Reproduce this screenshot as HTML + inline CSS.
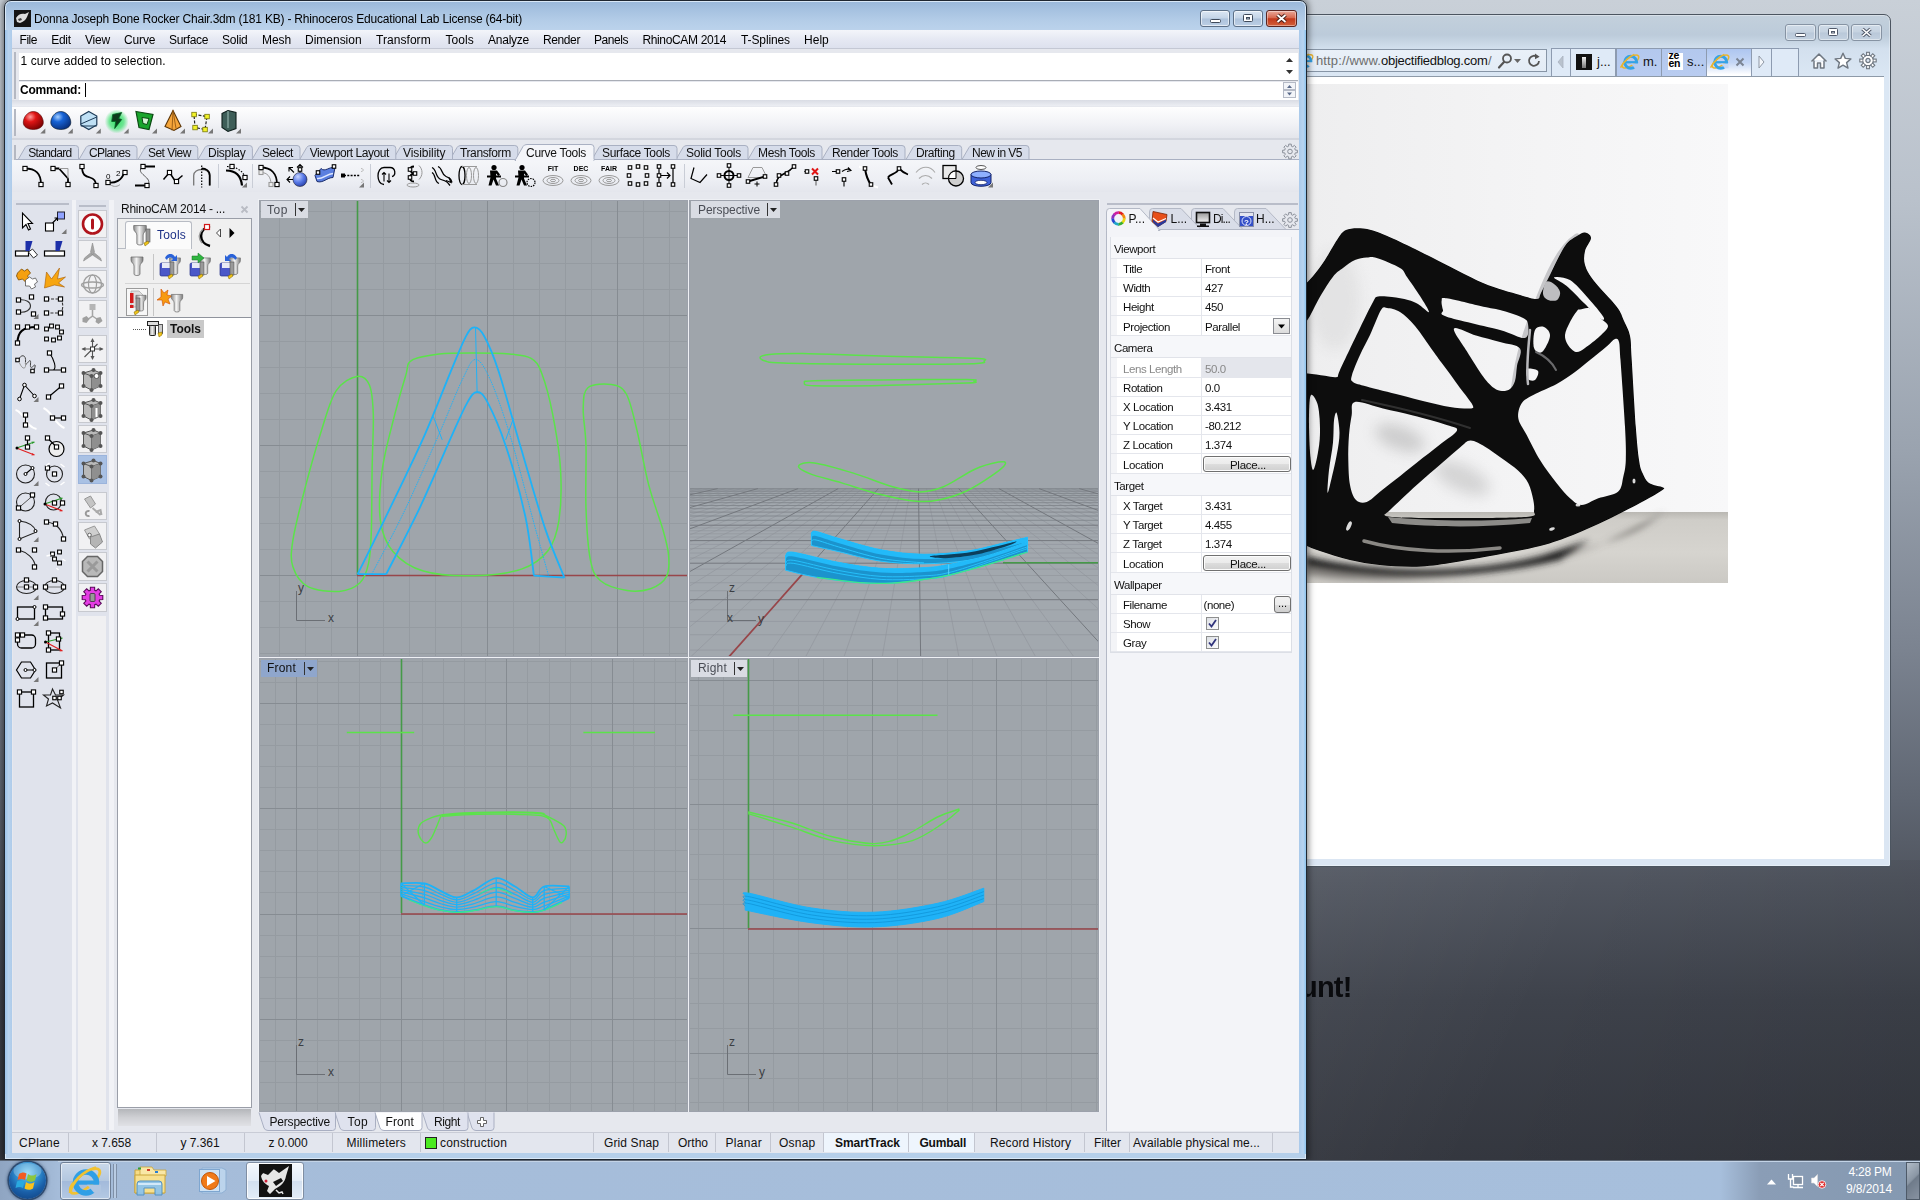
<!DOCTYPE html>
<html><head><meta charset="utf-8"><title>Rhino</title>
<style>
html,body{margin:0;padding:0;}
body{width:1920px;height:1200px;overflow:hidden;position:relative;font-family:"Liberation Sans",sans-serif;font-size:12px;
background:linear-gradient(180deg,#c9d0d8 0px,#b9c1cb 200px,#9aa3af 450px,#7b8390 650px,#5f6672 800px,#50555f 880px,#3e424b 1000px,#34373f 1160px);}
.a{position:absolute;box-sizing:border-box;}
.t{position:absolute;white-space:nowrap;line-height:1.24;}
svg{position:absolute;overflow:visible;}
</style></head><body>

<div class="a" style="left:1300px;top:860px;width:620px;height:300px;background:linear-gradient(115deg,rgba(255,255,255,.05) 0,rgba(255,255,255,0) 40%,rgba(0,0,0,.08) 100%)"></div>
<span class="t" style="left:1300px;top:970px;font-size:29px;font-weight:bold;color:#0a0b0e;letter-spacing:-0.8px;filter:blur(0.7px)">unt!</span>
<div class="a" style="left:1300px;top:14px;width:591px;height:853px;border:1px solid #4c5560;border-radius:7px 7px 2px 2px;background:linear-gradient(180deg,#c3d0dc 0px,#bccbda 20px,#d3e0ee 34px,#dbe7f4 62px,#dbe6f3 100%);box-shadow:0 0 0 1px rgba(255,255,255,.35) inset"></div>
<div class="a" style="left:1306px;top:76px;width:578px;height:783px;background:#fff;border-top:1px solid #8e9aa8"></div>
<div class="a" style="left:1306px;top:84px;width:422px;height:499px;background:linear-gradient(90deg,#eeeeef 0%,#f3f3f4 45%,#f8f8f9 100%)"></div>
<div class="a" style="left:1306px;top:512px;width:422px;height:71px;background:linear-gradient(180deg,#b9b7b2 0,#cfcdc8 8px,#d6d4cf 40px,#cbc9c4 100%)"></div>
<div class="a" style="left:1300px;top:49px;width:247px;height:23px;border:1px solid #8795a6;background:linear-gradient(180deg,#e9f0f8,#e3ecf6)"></div>
<svg style="left:1297px;top:52px" width="17" height="17" viewBox="0 0 20 20"><ellipse cx="10" cy="10" rx="10.2" ry="4.2" transform="rotate(-35 10 10)" fill="none" stroke="#e9b52f" stroke-width="1.6"/><circle cx="10.2" cy="10.8" r="6.3" fill="none" stroke="#35a3e6" stroke-width="3.2"/><rect x="5" y="9.6" width="12" height="2.4" fill="#35a3e6"/><path d="M10.5 12 h8 v5 h-4z" fill="#e6eef8"/><path d="M-0.5 16.5 C2 12 6 6 14 2.6" fill="none" stroke="#e9b52f" stroke-width="1.6"/></svg>
<span class="t" style="left:1316.0px;top:52.9px;font-size:13px;letter-spacing:0.121px;color:#6d6d6d;">http</span>
<span class="t" style="left:1338.2px;top:52.9px;font-size:13px;letter-spacing:0.134px;color:#6d6d6d;">://www.</span>
<span class="t" style="left:1381.0px;top:52.9px;font-size:13px;letter-spacing:-0.252px;color:#111;">objectifiedblog.com</span>
<span class="t" style="left:1488.0px;top:52.9px;font-size:13px;color:#6d6d6d;">/</span>
<svg style="left:1493.500px;top:50px" width="52" height="22"><circle cx="13" cy="8.5" r="4" fill="none" stroke="#555" stroke-width="1.8"/><path d="M10 12 L5 17.5" stroke="#555" stroke-width="2.2" stroke-linecap="round"/><path d="M20 9 h7 l-3.5 4z" fill="#666"/><path d="M43.5 7.2 A5 5 0 1 0 45 11" fill="none" stroke="#555" stroke-width="1.8"/><path d="M41 3.5 l4.6 3.2 -4.6 2.6z" fill="#555"/></svg>
<div class="a" style="left:1551px;top:48px;width:248px;height:28px;background:#dfeaf7;border:1px solid #8d9bb0;border-bottom:none"></div>
<div class="a" style="left:1551px;top:48px;width:20px;height:28px;background:#dfeaf7;border:1px solid #8d9bb0;border-bottom:none"></div>
<div class="a" style="left:1570px;top:48px;width:46px;height:28px;background:#dfeaf7;border:1px solid #8d9bb0;border-bottom:none"></div>
<div class="a" style="left:1616px;top:48px;width:46px;height:28px;background:linear-gradient(180deg,#b3c8ee,#b9ccf0);border:1px solid #8d9bb0;border-bottom:none"></div>
<div class="a" style="left:1661px;top:48px;width:46px;height:28px;background:linear-gradient(180deg,#b3c8ee,#b9ccf0);border:1px solid #8d9bb0;border-bottom:none"></div>
<div class="a" style="left:1706px;top:48px;width:46px;height:28px;background:linear-gradient(180deg,#aec6f0 0,#c4d6f5 50%,#fff 95%);border:1px solid #8d9bb0;border-bottom:none"></div>
<div class="a" style="left:1751px;top:48px;width:21px;height:28px;background:#dfeaf7;border:1px solid #8d9bb0;border-bottom:none"></div>
<div class="a" style="left:1771px;top:48px;width:28px;height:28px;background:#dfeaf7;border:1px solid #8d9bb0;border-bottom:none"></div>
<svg style="left:1551px;top:48px" width="250" height="28"><path d="M12 8 l-5 6 5 6z" fill="#b9c2cd" stroke="#a9b3c0" stroke-width=".8"/><path d="M208 8 l5 6 -5 6z" fill="#f4f7fb" stroke="#8f98a5" stroke-width="1"/></svg>
<div class="a" style="left:1576px;top:54px;width:16px;height:16px;background:#111"></div><div class="a" style="left:1582px;top:57px;width:4px;height:11px;background:linear-gradient(180deg,#eee,#777)"></div>
<span class="t" style="left:1597.0px;top:53.9px;font-size:13px;color:#111;">j...</span>
<svg style="left:1621px;top:52px" width="19" height="19" viewBox="0 0 20 20"><ellipse cx="10" cy="10" rx="10.2" ry="4.2" transform="rotate(-35 10 10)" fill="none" stroke="#e9b52f" stroke-width="1.6"/><circle cx="10.2" cy="10.8" r="6.3" fill="none" stroke="#35a3e6" stroke-width="3.2"/><rect x="5" y="9.6" width="12" height="2.4" fill="#35a3e6"/><path d="M10.5 12 h8 v5 h-4z" fill="#b6caef"/><path d="M-0.5 16.5 C2 12 6 6 14 2.6" fill="none" stroke="#e9b52f" stroke-width="1.6"/></svg>
<span class="t" style="left:1643.0px;top:53.9px;font-size:13px;color:#111;">m.</span>
<div class="a" style="left:1668px;top:53px;width:15px;height:17px;background:#fff"></div>
<span class="t" style="left:1668.5px;top:51px;font-size:10.5px;font-weight:bold;line-height:8px;color:#000;letter-spacing:-0.3px">ze<br>en</span>
<span class="t" style="left:1687.0px;top:53.9px;font-size:13px;color:#111;">s...</span>
<svg style="left:1711px;top:52px" width="19" height="19" viewBox="0 0 20 20"><ellipse cx="10" cy="10" rx="10.2" ry="4.2" transform="rotate(-35 10 10)" fill="none" stroke="#e9b52f" stroke-width="1.6"/><circle cx="10.2" cy="10.8" r="6.3" fill="none" stroke="#35a3e6" stroke-width="3.2"/><rect x="5" y="9.6" width="12" height="2.4" fill="#35a3e6"/><path d="M10.5 12 h8 v5 h-4z" fill="#c6d8f5"/><path d="M-0.5 16.5 C2 12 6 6 14 2.6" fill="none" stroke="#e9b52f" stroke-width="1.6"/></svg>
<svg style="left:1734px;top:56px" width="12" height="12"><path d="M2.5 2.5 L9.5 9.5 M9.5 2.5 L2.5 9.5" stroke="#7b8493" stroke-width="2"/></svg>
<svg style="left:1808px;top:50px" width="72" height="22"><path d="M3.5 11.5 L11 4 L18.5 11.5 M6 10.5 V18 H9.5 V13 H12.5 V18 H16 V10.5" fill="#fff" stroke="#6f7781" stroke-width="1.5" stroke-linejoin="round"/><path d="M35 3.2 l2.3 5.2 5.6.5 -4.3 3.7 1.4 5.5 -5-3 -5 3 1.4-5.5 -4.3-3.7 5.6-.5z" fill="#fff" stroke="#6f7781" stroke-width="1.4" stroke-linejoin="round"/><g transform="translate(60,10.5)"><circle r="5.3" fill="#fff" stroke="#6f7781" stroke-width="1.4"/><circle r="2.1" fill="#dce7f4" stroke="#6f7781" stroke-width="1.3"/><rect x="-1.4" y="-8.2" width="2.8" height="3.2" fill="#fff" stroke="#6f7781" stroke-width="1.1" transform="rotate(0)"/><rect x="-1.4" y="-8.2" width="2.8" height="3.2" fill="#fff" stroke="#6f7781" stroke-width="1.1" transform="rotate(45)"/><rect x="-1.4" y="-8.2" width="2.8" height="3.2" fill="#fff" stroke="#6f7781" stroke-width="1.1" transform="rotate(90)"/><rect x="-1.4" y="-8.2" width="2.8" height="3.2" fill="#fff" stroke="#6f7781" stroke-width="1.1" transform="rotate(135)"/><rect x="-1.4" y="-8.2" width="2.8" height="3.2" fill="#fff" stroke="#6f7781" stroke-width="1.1" transform="rotate(180)"/><rect x="-1.4" y="-8.2" width="2.8" height="3.2" fill="#fff" stroke="#6f7781" stroke-width="1.1" transform="rotate(225)"/><rect x="-1.4" y="-8.2" width="2.8" height="3.2" fill="#fff" stroke="#6f7781" stroke-width="1.1" transform="rotate(270)"/><rect x="-1.4" y="-8.2" width="2.8" height="3.2" fill="#fff" stroke="#6f7781" stroke-width="1.1" transform="rotate(315)"/><circle r="4.6" fill="#fff"/><circle r="2.1" fill="#dce7f4" stroke="#6f7781" stroke-width="1.3"/></g></svg>
<div class="a" style="left:1785px;top:24px;width:31px;height:17px;border:1px solid #8693a3;border-radius:3px;background:linear-gradient(180deg,#cfdbe8 0,#c5d2e0 48%,#b9c8d9 52%,#c3d1e0 100%);box-shadow:0 0 0 1px rgba(255,255,255,.45) inset"></div>
<div class="a" style="left:1818px;top:24px;width:31px;height:17px;border:1px solid #8693a3;border-radius:3px;background:linear-gradient(180deg,#cfdbe8 0,#c5d2e0 48%,#b9c8d9 52%,#c3d1e0 100%);box-shadow:0 0 0 1px rgba(255,255,255,.45) inset"></div>
<div class="a" style="left:1851px;top:24px;width:31px;height:17px;border:1px solid #8693a3;border-radius:3px;background:linear-gradient(180deg,#cfdbe8 0,#c5d2e0 48%,#b9c8d9 52%,#c3d1e0 100%);box-shadow:0 0 0 1px rgba(255,255,255,.45) inset"></div>
<svg style="left:1785px;top:24px" width="100" height="17"><rect x="10.5" y="9.5" width="10" height="3" rx="1" fill="#fff" stroke="#50596a" stroke-width="1"/><rect x="43.500" y="4.5" width="9" height="7" rx="1" fill="#fff" stroke="#50596a" stroke-width="1"/><rect x="46.5" y="7.5" width="3" height="1.5" fill="#dfe6ee" stroke="#50596a" stroke-width="1"/><path d="M77.500 5 L85.500 12 M85.500 5 L77.500 12" stroke="#50596a" stroke-width="3.6"/><path d="M77.500 5 L85.500 12 M85.500 5 L77.500 12" stroke="#fff" stroke-width="1.6"/></svg>
<svg style="left:0;top:0" width="1920" height="1200" viewBox="0 0 1920 1200">
<defs><clipPath id="photo"><rect x="1306" y="84" width="422" height="499"/></clipPath><filter id="bl6" x="-30%" y="-30%" width="160%" height="160%"><feGaussianBlur stdDeviation="7"/></filter><filter id="bl3" x="-30%" y="-30%" width="160%" height="160%"><feGaussianBlur stdDeviation="3"/></filter><filter id="bl1" x="-30%" y="-30%" width="160%" height="160%"><feGaussianBlur stdDeviation="0.6"/></filter>
<mask id="chm" maskUnits="userSpaceOnUse" x="1290" y="200" width="400" height="400"><rect x="1290" y="200" width="400" height="400" fill="#fff"/><g fill="#000" filter="url(#bl1)">
<path d="M1285.0 345.0 C1286.8 338.2 1292.4 331.0 1296.0 327.0 C1299.6 323.0 1302.7 326.1 1306.7 321.0 C1310.7 315.9 1315.6 304.1 1320.0 296.7 C1324.4 289.3 1329.2 281.5 1333.0 276.7 C1336.8 271.9 1339.3 270.8 1343.0 268.0 C1346.7 265.2 1351.0 261.8 1355.0 260.0 C1359.0 258.2 1363.1 257.8 1366.7 257.5 C1370.3 257.2 1371.2 256.2 1376.7 258.0 C1382.2 259.8 1395.0 264.8 1400.0 268.0 C1405.0 271.2 1403.7 272.3 1407.0 277.0 C1410.3 281.7 1416.3 290.2 1420.0 296.0 C1423.7 301.8 1429.3 310.7 1429.0 312.0 C1428.7 313.3 1421.5 306.0 1418.0 304.0 C1414.5 302.0 1412.3 301.2 1408.0 300.0 C1403.7 298.8 1397.0 297.6 1392.0 297.0 C1387.0 296.4 1381.2 295.7 1378.0 296.5 C1374.8 297.3 1376.0 296.8 1373.0 302.0 C1370.0 307.2 1365.5 316.7 1360.0 328.0 C1354.5 339.3 1343.8 361.8 1340.0 370.0 C1336.2 378.2 1339.5 376.0 1337.0 377.0 C1334.5 378.0 1329.8 376.4 1325.0 375.8 C1320.2 375.2 1312.8 374.0 1308.0 373.5 C1303.2 373.0 1299.8 373.9 1296.0 373.0 C1292.2 372.1 1286.8 372.7 1285.0 368.0 C1283.2 363.3 1283.2 351.8 1285.0 345.0 z"/>
<path d="M1381.0 310.0 C1383.8 305.5 1383.8 307.7 1387.0 308.0 C1390.2 308.3 1395.3 309.0 1400.0 312.0 C1404.7 315.0 1409.5 319.5 1415.0 326.0 C1420.5 332.5 1428.7 345.0 1433.0 351.0 C1437.3 357.0 1438.2 358.2 1441.0 362.0 C1443.8 365.8 1446.8 369.7 1450.0 374.0 C1453.2 378.3 1457.2 384.2 1460.0 388.0 C1462.8 391.8 1464.8 394.0 1467.0 397.0 C1469.2 400.0 1472.5 404.1 1473.0 406.0 C1473.5 407.9 1473.8 408.3 1470.0 408.5 C1466.2 408.7 1457.5 408.2 1450.0 407.0 C1442.5 405.8 1433.3 403.5 1425.0 401.5 C1416.7 399.5 1409.7 397.5 1400.0 395.0 C1390.3 392.5 1374.5 388.7 1366.7 386.5 C1358.9 384.3 1355.5 383.9 1353.0 382.0 C1350.5 380.1 1350.8 379.5 1352.0 375.0 C1353.2 370.5 1357.0 361.7 1360.0 355.0 C1363.0 348.3 1366.5 342.5 1370.0 335.0 C1373.5 327.5 1378.2 314.5 1381.0 310.0 z"/>
<path d="M1355.0 402.0 C1360.2 400.9 1373.3 406.2 1383.0 408.5 C1392.7 410.8 1402.4 412.8 1413.0 415.5 C1423.6 418.2 1439.4 422.5 1446.7 425.0 C1454.0 427.5 1458.1 427.2 1457.0 430.5 C1455.9 433.8 1446.7 439.1 1440.0 444.5 C1433.3 449.9 1424.2 456.8 1416.7 462.7 C1409.2 468.6 1401.1 475.2 1395.0 480.0 C1388.9 484.8 1384.7 488.0 1380.0 491.7 C1375.3 495.4 1370.7 500.6 1366.7 502.0 C1362.7 503.4 1358.8 502.8 1356.0 500.0 C1353.2 497.2 1351.3 491.7 1350.0 485.0 C1348.7 478.3 1348.5 468.3 1348.3 460.0 C1348.1 451.7 1348.4 442.5 1349.0 435.0 C1349.6 427.5 1350.7 420.5 1351.7 415.0 C1352.7 409.5 1349.8 403.1 1355.0 402.0 z"/>
<path d="M1470.5 440.5 C1474.7 440.4 1479.8 443.7 1485.0 446.7 C1490.2 449.7 1496.2 454.3 1501.7 458.3 C1507.2 462.3 1513.9 466.6 1518.3 470.8 C1522.7 475.0 1525.8 478.4 1528.3 483.3 C1530.8 488.2 1532.3 495.4 1533.3 500.0 C1534.2 504.6 1534.5 508.2 1534.0 511.0 C1533.5 513.8 1538.5 515.3 1530.0 516.5 C1521.5 517.7 1499.4 517.8 1483.3 518.0 C1467.2 518.2 1447.2 518.1 1433.3 518.0 C1419.4 517.9 1408.0 517.9 1400.0 517.5 C1392.0 517.1 1386.7 516.8 1385.0 515.5 C1383.3 514.2 1384.7 515.1 1390.0 510.0 C1395.3 504.9 1408.1 492.8 1416.7 485.0 C1425.3 477.2 1434.5 469.6 1441.7 463.3 C1448.9 457.1 1455.2 451.3 1460.0 447.5 C1464.8 443.7 1466.3 440.6 1470.5 440.5 z"/>
<path d="M1521.7 403.3 C1524.2 399.4 1527.5 398.2 1533.3 395.0 C1539.1 391.8 1549.8 387.8 1556.7 384.0 C1563.7 380.2 1569.5 376.0 1575.0 372.0 C1580.5 368.0 1584.8 364.2 1590.0 360.0 C1595.2 355.8 1601.8 350.5 1606.0 347.0 C1610.2 343.5 1612.8 339.8 1615.0 339.0 C1617.2 338.2 1618.1 338.5 1619.0 342.0 C1619.9 345.5 1619.5 345.9 1620.5 360.0 C1621.5 374.1 1624.1 410.0 1625.0 426.7 C1625.9 443.4 1626.1 451.7 1625.8 460.0 C1625.5 468.3 1624.6 471.4 1623.3 476.7 C1622.0 482.0 1622.2 488.1 1618.0 491.7 C1613.8 495.3 1604.3 496.1 1598.3 498.3 C1592.2 500.5 1586.4 505.0 1581.7 505.0 C1577.0 505.0 1574.2 501.9 1570.0 498.3 C1565.8 494.7 1561.7 489.7 1556.7 483.3 C1551.7 476.9 1545.0 468.1 1540.0 460.0 C1535.0 451.9 1530.3 441.9 1526.7 435.0 C1523.1 428.1 1519.1 423.6 1518.3 418.3 C1517.5 413.0 1519.2 407.2 1521.7 403.3 z"/>
<path d="M1441.7 300.5 C1442.3 298.6 1439.8 297.3 1446.7 298.3 C1453.6 299.3 1474.4 304.8 1483.3 306.7 C1492.2 308.6 1493.5 308.2 1500.0 310.0 C1506.5 311.8 1517.3 315.2 1522.0 317.5 C1526.7 319.8 1527.5 320.6 1528.0 324.0 C1528.5 327.4 1529.7 337.0 1525.0 338.0 C1520.3 339.0 1513.0 333.6 1500.0 330.0 C1487.0 326.4 1456.2 320.0 1446.7 316.7 C1437.2 313.4 1443.8 312.7 1443.0 310.0 C1442.2 307.3 1441.1 302.4 1441.7 300.5 z"/>
<path d="M1454.0 328.5 C1455.5 325.9 1468.3 333.2 1476.0 335.5 C1483.7 337.8 1492.7 339.8 1500.0 342.0 C1507.3 344.2 1517.2 344.5 1520.0 348.5 C1522.8 352.5 1517.8 360.6 1517.0 366.0 C1516.2 371.4 1516.2 377.2 1515.0 381.0 C1513.8 384.8 1512.2 387.3 1510.0 389.0 C1507.8 390.7 1504.7 391.2 1502.0 391.0 C1499.3 390.8 1497.1 390.4 1494.0 388.0 C1490.9 385.6 1487.8 382.9 1483.3 376.7 C1478.8 370.5 1471.6 359.0 1466.7 351.0 C1461.8 343.0 1452.5 331.1 1454.0 328.5 z"/>
<path d="M1580.0 309.5 C1582.2 309.1 1586.7 307.1 1590.0 308.5 C1593.3 309.9 1597.0 315.1 1600.0 318.0 C1603.0 320.9 1608.0 323.0 1608.0 326.0 C1608.0 329.0 1603.8 332.3 1600.0 336.0 C1596.2 339.7 1589.0 345.3 1585.0 348.0 C1581.0 350.7 1578.8 352.5 1576.0 352.0 C1573.2 351.5 1569.8 347.8 1568.0 345.0 C1566.2 342.2 1564.7 338.8 1565.0 335.0 C1565.3 331.2 1568.0 326.0 1570.0 322.0 C1572.0 318.0 1575.3 313.1 1577.0 311.0 C1578.7 308.9 1577.8 309.9 1580.0 309.5 z"/>
<path d="M1554.0 277.5 C1554.5 276.5 1564.3 276.6 1570.0 280.0 C1575.7 283.4 1582.5 291.9 1588.0 298.0 C1593.5 304.1 1601.3 313.3 1603.3 316.7 C1605.3 320.1 1603.2 320.8 1600.0 318.5 C1596.8 316.2 1589.5 308.4 1584.0 303.0 C1578.5 297.6 1571.7 290.2 1566.7 286.0 C1561.7 281.8 1553.5 278.5 1554.0 277.5 z"/>
<path d="M1535.0 330.0 C1536.7 326.5 1541.5 326.0 1544.0 327.0 C1546.5 328.0 1550.3 331.8 1550.0 336.0 C1549.7 340.2 1544.7 350.0 1542.0 352.0 C1539.3 354.0 1535.2 351.7 1534.0 348.0 C1532.8 344.3 1533.3 333.5 1535.0 330.0 z"/>
<path d="M1527.0 369.0 C1528.7 367.7 1536.7 369.2 1538.0 371.0 C1539.3 372.8 1536.7 378.7 1535.0 380.0 C1533.3 381.3 1529.3 380.8 1528.0 379.0 C1526.7 377.2 1525.3 370.3 1527.0 369.0 z"/>
<path d="M1311.0 395.0 C1312.5 393.5 1316.5 399.7 1318.0 406.0 C1319.5 412.3 1320.1 424.8 1320.0 433.0 C1319.9 441.2 1318.7 448.8 1317.5 455.0 C1316.3 461.2 1314.2 470.5 1313.0 470.0 C1311.8 469.5 1310.7 461.2 1310.0 452.0 C1309.3 442.8 1308.8 424.5 1309.0 415.0 C1309.2 405.5 1309.5 396.5 1311.0 395.0 z"/>
<path d="M1336.7 413.0 C1337.6 415.1 1339.5 426.0 1339.5 433.0 C1339.5 440.0 1338.3 446.3 1336.7 455.0 C1335.1 463.7 1331.5 478.8 1330.0 485.0 C1328.5 491.2 1327.7 494.5 1327.5 492.0 C1327.3 489.5 1328.1 478.2 1329.0 470.0 C1329.9 461.8 1332.2 450.8 1333.0 442.5 C1333.8 434.2 1333.4 425.4 1334.0 420.5 C1334.6 415.6 1335.8 410.9 1336.7 413.0 z"/>
</g></mask></defs>
<g clip-path="url(#photo)">
<g filter="url(#bl6)" opacity=".4"><ellipse cx="1400" cy="438" rx="26" ry="12" fill="#9a9a9a" transform="rotate(20 1400 438)"/><ellipse cx="1462" cy="478" rx="30" ry="13" fill="#a8a8a8" transform="rotate(25 1462 478)"/><ellipse cx="1335" cy="300" rx="25" ry="50" fill="#d2d2d2"/></g>
<g filter="url(#bl3)"><path d="M1306 560 C1380 578 1480 578 1560 556 S1640 530 1665 512 L1600 545 C1540 570 1400 590 1306 575z" fill="#6f6d69" opacity=".8"/><path d="M1306 556 C1380 574 1470 574 1540 556 L1590 540 L1560 560 C1480 580 1380 580 1306 566z" fill="#222"/></g>
<path d="M1577 237 C1560 248 1548 276 1538 302 S1519 352 1514.500 388" fill="none" stroke="#c6c6c9" stroke-width="7" stroke-linecap="round"/>
<g mask="url(#chm)"><path d="M1280.0 330.0 C1281.3 298.3 1283.0 316.3 1286.0 310.0 C1289.0 303.7 1293.6 297.6 1298.0 292.0 C1302.4 286.4 1308.0 282.0 1312.5 276.7 C1317.0 271.4 1320.9 266.1 1325.0 260.0 C1329.1 253.9 1333.5 245.0 1337.0 240.0 C1340.5 235.0 1341.7 231.9 1346.0 230.0 C1350.3 228.1 1357.3 228.0 1363.0 228.5 C1368.7 229.0 1372.7 230.2 1380.0 233.0 C1387.3 235.8 1397.9 240.8 1406.7 245.0 C1415.5 249.2 1420.3 251.7 1433.0 258.0 C1445.7 264.3 1468.5 276.8 1483.0 283.0 C1497.5 289.2 1511.0 292.3 1520.0 295.0 C1529.0 297.7 1533.5 299.3 1537.0 299.0 C1540.5 298.7 1538.8 297.0 1541.0 293.0 C1543.2 289.0 1546.0 282.8 1550.0 275.0 C1554.0 267.2 1560.5 252.5 1565.0 246.0 C1569.5 239.5 1573.7 238.2 1577.0 236.0 C1580.3 233.8 1582.7 232.2 1585.0 232.5 C1587.3 232.8 1591.0 234.9 1591.0 238.0 C1591.0 241.1 1586.0 246.5 1585.0 251.0 C1584.0 255.5 1583.5 260.0 1585.0 265.0 C1586.5 270.0 1588.7 274.1 1594.0 281.0 C1599.3 287.9 1611.7 300.0 1616.7 306.7 C1621.7 313.4 1621.8 316.1 1624.0 321.0 C1626.2 325.9 1628.7 329.5 1630.0 336.0 C1631.3 342.5 1630.7 344.8 1631.7 360.0 C1632.7 375.2 1634.6 410.3 1635.8 427.0 C1637.0 443.7 1637.9 452.3 1639.0 460.0 C1640.1 467.7 1640.8 469.2 1642.5 473.0 C1644.2 476.8 1645.6 480.6 1649.0 483.0 C1652.4 485.4 1661.0 486.2 1663.0 487.5 C1665.0 488.8 1664.8 488.4 1661.0 491.0 C1657.2 493.6 1649.0 498.2 1640.0 503.0 C1631.0 507.8 1617.9 514.7 1606.7 520.0 C1595.5 525.3 1584.1 530.7 1573.0 535.0 C1561.9 539.3 1553.8 542.5 1540.0 546.0 C1526.2 549.5 1505.0 553.2 1490.0 556.0 C1475.0 558.8 1462.2 561.2 1450.0 563.0 C1437.8 564.8 1428.4 566.4 1416.7 566.7 C1405.0 567.0 1391.1 566.1 1380.0 565.0 C1368.9 563.9 1360.0 562.3 1350.0 560.0 C1340.0 557.7 1328.7 554.0 1320.0 551.0 C1311.3 548.0 1304.0 544.8 1298.0 542.0 C1292.0 539.2 1287.3 541.0 1284.0 534.0 C1280.7 527.0 1278.7 534.0 1278.0 500.0 C1277.3 466.0 1278.7 361.7 1280.0 330.0 z" fill="#070707" filter="url(#bl1)"/></g>
<path d="M1546.0 282.0 C1547.8 280.3 1551.7 282.3 1554.0 284.0 C1556.3 285.7 1559.5 289.3 1560.0 292.0 C1560.5 294.7 1559.0 298.7 1557.0 300.0 C1555.0 301.3 1550.3 301.0 1548.0 300.0 C1545.7 299.0 1543.3 297.0 1543.0 294.0 C1542.7 291.0 1544.2 283.7 1546.0 282.0 z" fill="#bdbdc0"/>
<path d="M1388 517 C1430 521 1480 522 1532 518 L1530 523 C1480 528 1430 527 1392 523z" fill="#8c8b88"/>
<path d="M1364 541 C1400 551 1450 554 1500 548" fill="none" stroke="#8a8884" stroke-width="3.500" stroke-linecap="round"/>
<path d="M1530 330 C1528 350 1526 368 1528 384" fill="none" stroke="#b9b9bc" stroke-width="2.500" stroke-linecap="round"/>
<path d="M1536 352 C1545 356 1552 362 1556 370" fill="none" stroke="#6a6a6c" stroke-width="2" stroke-linecap="round"/>
<g fill="#fff" opacity=".85"><ellipse cx="1349" cy="526" rx="2" ry="5" transform="rotate(25 1349 526)"/><ellipse cx="1552" cy="529" rx="3" ry="1.500" transform="rotate(-20 1552 529)"/><ellipse cx="1634" cy="481" rx="1.500" ry="2.500"/><ellipse cx="1578" cy="505" rx="2.500" ry="1.500"/></g>
<g fill="none" stroke="#3a3a3a" stroke-width="2" stroke-linecap="round" opacity=".8"><path d="M1362 400 C1400 408 1440 418 1470 428"/></g>
</g></svg>
<div class="a" style="left:4px;top:0px;width:1303px;height:1160px;border:1px solid #1f2731;border-radius:7px 7px 1px 1px;background:linear-gradient(180deg,#9ab8da 0px,#a5c1e0 8px,#b4cde8 20px,#bcd3ec 30px,#bad2eb 60px,#b5cfea 100%);box-shadow:0 0 0 1px #d9e8f7 inset,0 0 7px 1px rgba(0,0,0,.55)"></div>
<div class="a" style="left:1299px;top:30px;width:7px;height:1124px;background:linear-gradient(90deg,#a9c9ea,#b8d4f0 60%,#8ec4ee)"></div>
<div class="a" style="left:5px;top:30px;width:7px;height:1124px;background:linear-gradient(90deg,#9cc3ea,#b8d3ee 50%,#aecbea)"></div>
<div class="a" style="left:12px;top:30px;width:1287px;height:1123px;background:#e6e8ee"></div>
<svg style="left:14px;top:10px" width="17" height="17" viewBox="0 0 17 17"><rect width="17" height="17" fill="#151515"/><path d="M2 8 C4 4 8 3 11 4 L15 2 L13 7 C12 10 9 12 6 13 L3 12z" fill="#ddd"/><path d="M4 9 l3 -1 1 2 -3 1z" fill="#444"/></svg>
<span class="t" style="left:34.0px;top:11.6px;font-size:12px;letter-spacing:-0.198px;color:#000;">Donna Joseph Bone Rocker Chair.3dm (181 KB) - Rhinoceros Educational Lab License (64-bit)</span>
<div class="a" style="left:1200px;top:10px;width:30px;height:17px;border:1px solid #5c6f86;border-radius:3px;background:linear-gradient(180deg,#dbe6f3 0,#c4d4e7 48%,#adc2db 52%,#bccfe5 100%);box-shadow:0 0 0 1px rgba(255,255,255,.6) inset"></div>
<div class="a" style="left:1233px;top:10px;width:30px;height:17px;border:1px solid #5c6f86;border-radius:3px;background:linear-gradient(180deg,#dbe6f3 0,#c4d4e7 48%,#adc2db 52%,#bccfe5 100%);box-shadow:0 0 0 1px rgba(255,255,255,.6) inset"></div>
<div class="a" style="left:1266px;top:10px;width:31px;height:17px;border:1px solid #5b2520;border-radius:3px;background:linear-gradient(180deg,#e9a99a 0,#d8694f 45%,#c2391c 52%,#d3603a 100%);box-shadow:0 0 0 1px rgba(255,255,255,.4) inset"></div>
<svg style="left:1200px;top:10px" width="100" height="17"><rect x="10.5" y="9.5" width="10" height="3" rx="1" fill="#fff" stroke="#3f4a5a" stroke-width="1"/><rect x="43.5" y="4.5" width="9" height="7" rx="1" fill="#fff" stroke="#3f4a5a" stroke-width="1"/><rect x="46.5" y="7.5" width="3" height="1.5" fill="#c4d4e7" stroke="#3f4a5a" stroke-width="1"/><path d="M77.5 5 L85.5 12 M85.5 5 L77.5 12" stroke="#4a2019" stroke-width="3.8"/><path d="M77.5 5 L85.5 12 M85.5 5 L77.5 12" stroke="#fff" stroke-width="1.8"/></svg>
<div class="a" style="left:12px;top:30px;width:1287px;height:19px;background:linear-gradient(180deg,#f3f5fa 0,#e6e9f3 50%,#dde1ee 100%);border-bottom:1px solid #c4c8d4"></div>
<span class="t" style="left:19.6px;top:32.6px;font-size:12px;letter-spacing:-0.534px;color:#000;">File</span>
<span class="t" style="left:51.2px;top:32.6px;font-size:12px;letter-spacing:-0.269px;color:#000;">Edit</span>
<span class="t" style="left:84.9px;top:32.6px;font-size:12px;letter-spacing:-0.173px;color:#000;">View</span>
<span class="t" style="left:124.0px;top:32.6px;font-size:12px;letter-spacing:-0.122px;color:#000;">Curve</span>
<span class="t" style="left:169.0px;top:32.6px;font-size:12px;letter-spacing:-0.336px;color:#000;">Surface</span>
<span class="t" style="left:222.0px;top:32.6px;font-size:12px;letter-spacing:-0.237px;color:#000;">Solid</span>
<span class="t" style="left:262.0px;top:32.6px;font-size:12px;letter-spacing:-0.085px;color:#000;">Mesh</span>
<span class="t" style="left:305.0px;top:32.6px;font-size:12px;letter-spacing:-0.010px;color:#000;">Dimension</span>
<span class="t" style="left:376.0px;top:32.6px;font-size:12px;letter-spacing:0.053px;color:#000;">Transform</span>
<span class="t" style="left:445.5px;top:32.6px;font-size:12px;letter-spacing:0.037px;color:#000;">Tools</span>
<span class="t" style="left:488.0px;top:32.6px;font-size:12px;letter-spacing:-0.241px;color:#000;">Analyze</span>
<span class="t" style="left:543.0px;top:32.6px;font-size:12px;letter-spacing:-0.392px;color:#000;">Render</span>
<span class="t" style="left:594.0px;top:32.6px;font-size:12px;letter-spacing:-0.448px;color:#000;">Panels</span>
<span class="t" style="left:642.4px;top:32.6px;font-size:12px;letter-spacing:-0.342px;color:#000;">RhinoCAM 2014</span>
<span class="t" style="left:741.0px;top:32.6px;font-size:12px;letter-spacing:-0.113px;color:#000;">T-Splines</span>
<span class="t" style="left:804.0px;top:32.6px;font-size:12px;letter-spacing:0.030px;color:#000;">Help</span>
<div class="a" style="left:14px;top:52px;width:2px;height:47px;border-left:1px solid #b4b8c2;border-right:1px solid #b4b8c2"></div>
<div class="a" style="left:19px;top:53px;width:1279px;height:28px;background:#fff;border-bottom:1px solid #a9adb6"></div>
<div class="a" style="left:19px;top:82px;width:1279px;height:18px;background:#fff"></div>
<div class="a" style="left:12px;top:100px;width:1287px;height:6px;background:linear-gradient(180deg,#d9dce4,#eceef3)"></div>
<span class="t" style="left:20.6px;top:53.6px;font-size:12px;letter-spacing:0.059px;color:#000;">1 curve added to selection.</span>
<span class="t" style="left:20.0px;top:82.6px;font-size:12px;font-weight:bold;letter-spacing:-0.208px;color:#000;">Command:</span>
<div class="a" style="left:85px;top:83px;width:1px;height:14px;background:#000"></div>
<svg style="left:1280px;top:53px" width="18" height="47"><path d="M6 9 l3.5 -4 3.500 4z M6 17 l3.5 4 3.500 -4z" fill="#333"/><rect x="3.5" y="29.500" width="12" height="7" fill="#f2f4f8" stroke="#b5bac6"/><rect x="3.500" y="37.500" width="12" height="7" fill="#f2f4f8" stroke="#b5bac6"/><path d="M7 35 l2.500 -3 2.500 3z M7 39.500 l2.500 3 2.500 -3z" fill="#5a6a8a"/></svg>
<div class="a" style="left:12px;top:107px;width:1287px;height:31px;background:linear-gradient(180deg,#fefefe 0,#f1f2f6 55%,#e3e5eb 100%)"></div>
<div class="a" style="left:12px;top:138px;width:1287px;height:2px;background:#d3d6de"></div>
<div class="a" style="left:14px;top:109px;width:2px;height:27px;border-left:1px solid #b4b8c2;border-right:1px solid #b4b8c2"></div>
<div class="a" style="left:14px;top:145px;width:2px;height:45px;border-left:1px solid #b4b8c2;border-right:1px solid #b4b8c2"></div>
<div class="a" style="left:12px;top:160px;width:1287px;height:32px;background:linear-gradient(180deg,#f5f6f9 0,#edeff4 60%,#e4e6ed 100%)"></div>
<svg style="left:0;top:0" width="1310" height="200" viewBox="0 0 1310 200">
<defs><radialGradient id="gr" cx=".35" cy=".3" r=".8"><stop offset="0" stop-color="#ff9d9d"/><stop offset=".35" stop-color="#e01515"/><stop offset="1" stop-color="#6e0000"/></radialGradient><radialGradient id="gb" cx=".35" cy=".3" r=".8"><stop offset="0" stop-color="#a6d0ff"/><stop offset=".35" stop-color="#1763d6"/><stop offset="1" stop-color="#062a73"/></radialGradient><radialGradient id="gs" cx=".35" cy=".3" r=".8"><stop offset="0" stop-color="#c9d6ff"/><stop offset=".5" stop-color="#5a7be8"/><stop offset="1" stop-color="#2038a0"/></radialGradient><radialGradient id="gg" cx=".5" cy=".5" r=".5"><stop offset="0" stop-color="#37e06a"/><stop offset=".6" stop-color="#37e06a" stop-opacity=".7"/><stop offset="1" stop-color="#37e06a" stop-opacity="0"/></radialGradient></defs>
<path d="M33.3 111.5 c-6 0 -10 6 -10 11 c0 4 4 7 10 7 s10 -3 10 -7 c0 -5 -4 -11 -10 -11z" fill="url(#gr)" stroke="#500" stroke-width=".6"/><path d="M40.3 133.5 l5 0 0 -5z" fill="#777"/>
<path d="M60.8 111.5 c-6 0 -10 6 -10 11 c0 4 4 7 10 7 s10 -3 10 -7 c0 -5 -4 -11 -10 -11z" fill="url(#gb)" stroke="#012" stroke-width=".6"/><path d="M67.8 133.5 l5 0 0 -5z" fill="#777"/>
<path d="M88.8 111.5 l8 4.500 v9 l-8 4.500 -8 -4.500 v-9z" fill="#bfe0f5" stroke="#1c3a57" stroke-width="1.2"/><path d="M80.8 124 l16 -7 M80.8 126 h16" stroke="#1c3a57" stroke-width="1" fill="none"/><path d="M95.8 133.5 l5 0 0 -5z" fill="#777"/>
<circle cx="116.7" cy="121.5" r="12" fill="url(#gg)"/><path d="M112.7 114.5 l9 -2 -3 6 3 1 -7 9 1 -7 -4 0z" fill="#0d3a1c" stroke="#062" stroke-width=".8"/><path d="M123.7 133.5 l5 0 0 -5z" fill="#777"/>
<path d="M136 111.5 l17 3 -4 15 -10 -2z" fill="#19a52c" stroke="#0a4a12" stroke-width="1.2"/><path d="M142 117.5 l7 1 -2 6 -4 -1z" fill="#d6f5d6" stroke="#0a4a12" stroke-width="1"/><path d="M152 133.5 l5 0 0 -5z" fill="#777"/>
<path d="M173 110.5 l8 16 -7 4 -9 -4z" fill="#f5a53a" stroke="#5b3405" stroke-width="1.1"/><path d="M173 110.5 l-1 20 M173 110.5 l3 18" stroke="#8a5210" stroke-width=".8"/><path d="M180 133.5 l5 0 0 -5z" fill="#777"/>
<path d="M194 114.5 l13 2 -2 13 -10 -2z" fill="none" stroke="#222" stroke-width="1.2" stroke-dasharray="3 1.5"/>
<rect x="191.8" y="112.3" width="4.500" height="4.500" fill="#f2f22a" stroke="#77770a" stroke-width=".8"/>
<rect x="204.8" y="114.3" width="4.500" height="4.500" fill="#f2f22a" stroke="#77770a" stroke-width=".8"/>
<rect x="202.8" y="127.3" width="4.500" height="4.500" fill="#f2f22a" stroke="#77770a" stroke-width=".8"/>
<rect x="192.8" y="125.3" width="4.500" height="4.500" fill="#f2f22a" stroke="#77770a" stroke-width=".8"/>
<path d="M208 133.5 l5 0 0 -5z" fill="#777"/>
<path d="M222 113.5 l6 -3 8 2 v16 l-8 3 -6 -4z" fill="#3e5e58" stroke="#0f1f1c" stroke-width="1.1"/><path d="M228 111 v17" stroke="#9fc0b8" stroke-width="1"/><path d="M236 133.5 l5 0 0 -5z" fill="#777"/>
<g transform="translate(21,163.5)"><path d="M4 5 C14 5 20 9 20 21" fill="none" stroke="#000" stroke-width="1.8"/><rect x="1.9" y="2.9" width="4.2" height="4.2" fill="#fff" stroke="#000" stroke-width="1.1"/><rect x="17.9" y="18.9" width="4.2" height="4.2" fill="#fff" stroke="#000" stroke-width="1.1"/></g>
<g transform="translate(49,163.5)"><path d="M4 5 L10 5 L19 15 L19 21" fill="none" stroke="#000" stroke-width="1.8" stroke-linejoin="round"/><path d="M10 5 h9 v10" fill="none" stroke="#999" stroke-width="1"/><rect x="1.9" y="2.9" width="4.2" height="4.2" fill="#fff" stroke="#000" stroke-width="1.1"/><rect x="16.9" y="18.9" width="4.2" height="4.2" fill="#fff" stroke="#000" stroke-width="1.1"/></g>
<g transform="translate(77,163.5)"><path d="M5 3 C5 12 9 13 13 14 S19 17 19 22" fill="none" stroke="#000" stroke-width="1.8"/><rect x="2.9" y="0.9" width="4.2" height="4.2" fill="#fff" stroke="#000" stroke-width="1.1"/><rect x="16.9" y="19.9" width="4.2" height="4.2" fill="#fff" stroke="#000" stroke-width="1.1"/></g>
<g transform="translate(105,163.5)"><path d="M3 19 C10 20 17 17 19 9" fill="none" stroke="#000" stroke-width="1.8"/><path d="M5 21 c4 3 8 2 10 0" fill="none" stroke="#999" stroke-width="1"/><text x="1" y="15" font-size="8" font-family="Liberation Sans">0</text><text x="11" y="12" font-size="8" font-family="Liberation Sans">2</text><rect x="0.9" y="16.9" width="4.2" height="4.2" fill="#fff" stroke="#000" stroke-width="1.1"/><rect x="17.9" y="6.9" width="4.2" height="4.2" fill="#fff" stroke="#000" stroke-width="1.1"/></g>
<g transform="translate(133,163.5)"><path d="M10 3 h12 M2 22 h12" stroke="#000" stroke-width="2" fill="none"/><path d="M10 3 C0 10 22 14 14 22" fill="none" stroke="#555" stroke-width="1"/><rect x="7.9" y="0.9" width="4.2" height="4.2" fill="#fff" stroke="#000" stroke-width="1.1"/><rect x="11.9" y="19.9" width="4.2" height="4.2" fill="#fff" stroke="#000" stroke-width="1.1"/></g>
<g transform="translate(160.5,163.5)"><path d="M3 16 L9 9 L15 18 L22 12" fill="none" stroke="#000" stroke-width="1.5" stroke-linejoin="round"/><rect x="6.9" y="6.9" width="4.2" height="4.2" fill="#fff" stroke="#000" stroke-width="1.1"/><rect x="13.9" y="15.9" width="4.2" height="4.2" fill="#fff" stroke="#000" stroke-width="1.1"/></g>
<g transform="translate(189.7,163.5)"><path d="M4 22 V12 C4 4 20 4 20 12 V22" fill="none" stroke="#777" stroke-width="1.3"/><path d="M20 22 V12 C20 7 16 5 12 5" fill="none" stroke="#000" stroke-width="1.8"/><path d="M12 2 V24" stroke="#000" stroke-width="1.2" stroke-dasharray="1.5 1.5"/></g>
<path d="M218.5 164 v24" stroke="#c9cdd6"/><path d="M252.500 164 v24 M370.5 164 v24 M684.5 164 v24" stroke="#c9cdd6"/>
<g transform="translate(223,163.5)"><path d="M3 7 C13 7 18 12 19 22" fill="none" stroke="#000" stroke-width="2.2"/><path d="M4 3 C14 3 22 8 23 18" fill="none" stroke="#000" stroke-width="1.2" stroke-dasharray="1.5 1.5"/><rect x="6.9" y="0.9" width="4.2" height="4.2" fill="#fff" stroke="#000" stroke-width="1.1"/><rect x="19.9" y="11.9" width="4.2" height="4.2" fill="#fff" stroke="#000" stroke-width="1.1"/><path d="M19 24 l5 0 0 -5z" fill="#777"/></g>
<g transform="translate(257,163.5)"><path d="M4 4 C14 4 20 10 20 21" fill="none" stroke="#000" stroke-width="1.8"/><path d="M4 9 C10 9 14 13 14 21" fill="none" stroke="#999" stroke-width="1"/><rect x="1.9" y="1.9" width="4.2" height="4.2" fill="#fff" stroke="#000" stroke-width="1.1"/><rect x="17.9" y="18.9" width="4.2" height="4.2" fill="#fff" stroke="#000" stroke-width="1.1"/><rect x="2" y="7" width="4" height="4" fill="#eee" stroke="#999" stroke-width="1.1"/><rect x="12" y="19" width="4" height="4" fill="#eee" stroke="#999" stroke-width="1.1"/></g>
<g transform="translate(286,163.5)"><circle cx="14" cy="16" r="7" fill="url(#gs)" stroke="#223" stroke-width=".6"/><path d="M14 9 V1 M11 4 l3 -3 3 3 M7 16 H1 M4 13 l-3 3 3 3 M8 9 L3 4 M3 8 V4 H7" fill="none" stroke="#000" stroke-width="1.1"/><rect x="12.25" y="4.25" width="3.5" height="3.5" fill="#fff" stroke="#000" stroke-width="1.1"/></g>
<g transform="translate(313,163.5)"><path d="M2 12 L8 5 C12 9 16 3 22 4 L20 14 C14 14 10 20 4 18z" fill="#5b7fe0" stroke="#1a2c6b" stroke-width="1"/><path d="M4 15 C10 16 14 10 20 10" stroke="#dfe8ff" stroke-width="1.500" fill="none"/><rect x="3.25" y="7.25" width="3.5" height="3.5" fill="#fff" stroke="#000" stroke-width="1.1"/><rect x="19.25" y="1.25" width="3.5" height="3.5" fill="#fff" stroke="#000" stroke-width="1.1"/></g>
<g transform="translate(340,163.5)"><path d="M4 12 H20" stroke="#000" stroke-width="1.600" stroke-dasharray="2 1.3"/><rect x="1" y="10" width="4" height="4"/><path d="M21 5 c3 0 3 3 0 3 M21 16 c3 0 3 3 0 3" stroke="#bbb" fill="none"/><path d="M19 24 l5 0 0 -5z" fill="#777"/></g>
<g transform="translate(374,163.5)"><path d="M10 21 C2 21 2 4 10 4 H16 C22 4 22 12 18 13" fill="none" stroke="#000" stroke-width="1.300"/><path d="M10 9 v9 M8 11 l2 -2 2 2 M15 10 v9 M13 17 l2 2 2 -2" stroke="#000" stroke-width="1.100" fill="none"/></g>
<g transform="translate(401,163.5)"><path d="M13 3 C7 3 9 9 13 10 C8 11 7 18 13 18" fill="none" stroke="#000" stroke-width="1.8"/><path d="M18 2 c4 4 4 10 0 14" fill="none" stroke="#999" stroke-width="1"/><ellipse cx="12" cy="21.500" rx="6" ry="2" fill="none" stroke="#999" stroke-width="1"/><rect x="7.25" y="4.25" width="3.5" height="3.5" fill="#fff" stroke="#000" stroke-width="1.1"/><rect x="12.25" y="8.25" width="3.5" height="3.5" fill="#fff" stroke="#000" stroke-width="1.1"/><rect x="7.25" y="12.25" width="3.5" height="3.5" fill="#fff" stroke="#000" stroke-width="1.1"/></g>
<g transform="translate(429,163.5)"><path d="M3 4 C8 6 6 14 12 16 S18 18 21 22 M9 3 C14 5 12 11 17 13 S22 16 23 19" fill="none" stroke="#000" stroke-width="1.300"/><path d="M3 9 C7 11 5 18 10 20" fill="none" stroke="#000" stroke-width="1.300"/><path d="M17 17 l5 2 -2 -5" fill="none" stroke="#000" stroke-width="1.200"/></g>
<g transform="translate(457,163.5)"><ellipse cx="5" cy="12" rx="3" ry="9" fill="none" stroke="#000" stroke-width="1.300"/><ellipse cx="12" cy="12" rx="2.500" ry="8" fill="none" stroke="#999" stroke-width="1"/><ellipse cx="19" cy="12" rx="2.500" ry="8" fill="none" stroke="#999" stroke-width="1"/><path d="M5 3 H20 M5 21 H20" fill="none" stroke="#999" stroke-width="1"/></g>
<g transform="translate(485,163.5)"><circle cx="9" cy="4" r="2.600"/><path d="M5 7 h7 l3 4 -1.500 1.500 -2.500 -2.500 v5 l3 7 h-3 l-2.500 -6 -2 6 h-3 l2 -8z"/><path d="M2 12 h14 v2 h-14z"/><circle cx="18" cy="19" r="4" fill="none" stroke="#888" stroke-width="1.200"/></g>
<g transform="translate(513,163.5)"><circle cx="9" cy="4" r="2.600"/><path d="M5 7 h7 l3 4 -1.500 1.500 -2.500 -2.500 v5 l3 7 h-3 l-2.500 -6 -2 6 h-3 l2 -8z"/><path d="M2 12 h14 v2 h-14z"/><circle cx="18" cy="19" r="4" fill="none" stroke="#000" stroke-width="1.200" stroke-dasharray="1.500 1"/></g>
<g transform="translate(541,163.5)"><text x="12" y="7" font-size="7" text-anchor="middle" font-family="Liberation Sans" font-weight="bold">FIT</text><ellipse cx="12" cy="17" rx="10" ry="5" fill="none" stroke="#999" stroke-width="1"/><ellipse cx="12" cy="17" rx="6" ry="3" fill="none" stroke="#999" stroke-width="1"/><ellipse cx="12" cy="17" rx="2.500" ry="1.200" fill="none" stroke="#999" stroke-width="1"/></g>
<g transform="translate(569,163.5)"><text x="12" y="7" font-size="7" text-anchor="middle" font-family="Liberation Sans" font-weight="bold">DEC</text><ellipse cx="12" cy="17" rx="10" ry="5" fill="none" stroke="#999" stroke-width="1"/><ellipse cx="12" cy="17" rx="6" ry="3" fill="none" stroke="#999" stroke-width="1"/><ellipse cx="12" cy="17" rx="2.500" ry="1.200" fill="none" stroke="#999" stroke-width="1"/></g>
<g transform="translate(597,163.5)"><text x="12" y="7" font-size="7" text-anchor="middle" font-family="Liberation Sans" font-weight="bold">FAIR</text><ellipse cx="12" cy="17" rx="10" ry="5" fill="none" stroke="#999" stroke-width="1"/><ellipse cx="12" cy="17" rx="6" ry="3" fill="none" stroke="#999" stroke-width="1"/><ellipse cx="12" cy="17" rx="2.500" ry="1.200" fill="none" stroke="#999" stroke-width="1"/></g>
<g transform="translate(626,163.5)"><rect x="2.25" y="2.25" width="3.5" height="3.5" fill="#fff" stroke="#000" stroke-width="1.1"/><rect x="10.25" y="1.25" width="3.5" height="3.5" fill="#fff" stroke="#000" stroke-width="1.1"/><rect x="18.25" y="2.25" width="3.5" height="3.5" fill="#fff" stroke="#000" stroke-width="1.1"/><rect x="1.25" y="10.25" width="3.5" height="3.5" fill="#fff" stroke="#000" stroke-width="1.1"/><rect x="19.25" y="10.25" width="3.5" height="3.5" fill="#fff" stroke="#000" stroke-width="1.1"/><rect x="2.25" y="18.25" width="3.5" height="3.5" fill="#fff" stroke="#000" stroke-width="1.1"/><rect x="10.25" y="19.25" width="3.5" height="3.5" fill="#fff" stroke="#000" stroke-width="1.1"/><rect x="18.25" y="18.25" width="3.5" height="3.5" fill="#fff" stroke="#000" stroke-width="1.1"/></g>
<g transform="translate(654,163.5)"><path d="M5 4 V20 M19 4 V20 M5 12 H16 M13 9 l3 3 -3 3" fill="none" stroke="#000" stroke-width="1.200"/><rect x="3.25" y="1.25" width="3.5" height="3.5" fill="#fff" stroke="#000" stroke-width="1.1"/><rect x="3.25" y="10.25" width="3.5" height="3.5" fill="#fff" stroke="#000" stroke-width="1.1"/><rect x="3.25" y="19.25" width="3.5" height="3.5" fill="#fff" stroke="#000" stroke-width="1.1"/><rect x="17.25" y="1.25" width="3.5" height="3.5" fill="#fff" stroke="#000" stroke-width="1.1"/><rect x="17.25" y="19.25" width="3.5" height="3.5" fill="#fff" stroke="#000" stroke-width="1.1"/></g>
<g transform="translate(688,163.5)"><path d="M6 4 L3 15 L12 19 L19 11" fill="none" stroke="#000" stroke-width="1.200"/></g>
<g transform="translate(717,163.5)"><circle cx="12" cy="12" r="4.500" fill="none" stroke="#000" stroke-width="2"/><path d="M12 2 V22 M2 12 H22" stroke="#000" stroke-width="1"/><rect x="10.25" y="0.25" width="3.5" height="3.5" fill="#fff" stroke="#000" stroke-width="1.1"/><rect x="10.25" y="20.25" width="3.5" height="3.5" fill="#fff" stroke="#000" stroke-width="1.1"/><rect x="0.25" y="10.25" width="3.5" height="3.5" fill="#fff" stroke="#000" stroke-width="1.1"/><rect x="20.25" y="10.25" width="3.5" height="3.5" fill="#fff" stroke="#000" stroke-width="1.1"/></g>
<g transform="translate(745,163.5)"><path d="M8 4 H17 L22 14 H3z" fill="none" stroke="#999" stroke-width="1"/><path d="M3 18 L20 13" stroke="#000" stroke-width="2"/><path d="M12 18 v5 M9.500 20.500 h5" stroke="#000" stroke-width="1"/><rect x="1.25" y="16.25" width="3.5" height="3.5" fill="#fff" stroke="#000" stroke-width="1.1"/><rect x="18.25" y="11.25" width="3.5" height="3.5" fill="#fff" stroke="#000" stroke-width="1.1"/></g>
<g transform="translate(773,163.5)"><path d="M3 21 C4 10 12 12 20 4" fill="none" stroke="#000" stroke-width="1.500"/><path d="M3 21 L6 12 L14 10 L20 4" fill="none" stroke="#000" stroke-width="1" stroke-dasharray="1.500 1.500"/><rect x="1.25" y="19.25" width="3.5" height="3.5" fill="#fff" stroke="#000" stroke-width="1.1"/><rect x="4.25" y="10.25" width="3.5" height="3.5" fill="#fff" stroke="#000" stroke-width="1.1"/><rect x="12.25" y="8.25" width="3.5" height="3.5" fill="#fff" stroke="#000" stroke-width="1.1"/><rect x="19.25" y="1.25" width="3.5" height="3.5" fill="#fff" stroke="#000" stroke-width="1.1"/></g>
<g transform="translate(801,163.5)"><path d="M3 8 h5 M15 14 v8" stroke="#555" stroke-width="1"/><path d="M11 5 l6 6 M17 5 l-6 6" stroke="#e01515" stroke-width="2"/><rect x="4.25" y="6.25" width="3.5" height="3.5" fill="#fff" stroke="#000" stroke-width="1.1"/><rect x="13.25" y="13.25" width="3.5" height="3.5" fill="#fff" stroke="#000" stroke-width="1.1"/></g>
<g transform="translate(830,163.5)"><path d="M2 8 h6 M14 14 v9 M12 8 c4 -3 7 -3 9 -1 M18 4 l3 3 -4 1" fill="none" stroke="#000" stroke-width="1.100"/><rect x="6.25" y="6.25" width="3.5" height="3.5" fill="#fff" stroke="#000" stroke-width="1.1"/><rect x="12.25" y="14.25" width="3.5" height="3.5" fill="#fff" stroke="#000" stroke-width="1.1"/></g>
<g transform="translate(858,163.5)"><path d="M7 5 C8 12 9 16 13 21" fill="none" stroke="#000" stroke-width="2"/><path d="M1 3 l5 2 M14 22 l6 2" stroke="#fff" stroke-width="2"/><rect x="5.25" y="3.25" width="3.5" height="3.5" fill="#fff" stroke="#000" stroke-width="1.1"/><rect x="11.25" y="19.25" width="3.5" height="3.5" fill="#fff" stroke="#000" stroke-width="1.1"/></g>
<g transform="translate(885,163.5)"><path d="M3 14 C5 10 12 11 14 5 C17 8 20 10 23 11 M3 14 L7 21" fill="none" stroke="#000" stroke-width="1.800"/><rect x="12.25" y="3.25" width="3.5" height="3.5" fill="#fff" stroke="#000" stroke-width="1.1"/></g>
<g transform="translate(913,163.5)"><path d="M3 9 c6 -7 14 -7 19 0 M6 15 c4 -4 9 -4 13 0 M9 21 c2 -2 5 -2 7 0" fill="none" stroke="#aaa" stroke-width="1.100"/></g>
<g transform="translate(941,163.5)"><rect x="2" y="2" width="13" height="13" fill="#e9e9e9" stroke="#000" stroke-width="1.300"/><circle cx="15" cy="15" r="7.500" fill="#cfcfcf" stroke="#000" stroke-width="1.300"/><path d="M15 15 V7.500 A7.500 7.500 0 0 0 7.500 15z" fill="#fff" stroke="#000" stroke-width="1"/></g>
<g transform="translate(969,163.5)"><ellipse cx="12" cy="4" rx="5" ry="2" fill="#fff" stroke="#555" stroke-width="1"/><path d="M2 11 v8 c0 5 20 5 20 0 v-8z" fill="#3f62d8" stroke="#14246b" stroke-width="1"/><ellipse cx="12" cy="11" rx="10" ry="3.500" fill="#8fb0ff" stroke="#14246b" stroke-width="1"/><ellipse cx="12" cy="19" rx="6" ry="2.200" fill="#fff" stroke="#14246b" stroke-width=".8"/><path d="M19 24 l5 0 0 -5z" fill="#777"/></g>
<path d="M16 159.500 H1299" stroke="#a9b0c2"/>
<path d="M962 159.500 L969 147.500 Q970 145.500 973 145.500 H1026 Q1029 145.500 1029 148.500 V159.500z" fill="#d6dcea" stroke="#a9b0c2"/>
<path d="M906 159.500 L913 147.500 Q914 145.500 917 145.500 H958.7 Q961.7 145.500 961.7 148.500 V159.500z" fill="#d6dcea" stroke="#a9b0c2"/>
<path d="M822 159.500 L829 147.500 Q830 145.500 833 145.500 H902 Q905 145.500 905 148.500 V159.500z" fill="#d6dcea" stroke="#a9b0c2"/>
<path d="M748 159.500 L755 147.500 Q756 145.500 759 145.500 H819 Q822 145.500 822 148.500 V159.500z" fill="#d6dcea" stroke="#a9b0c2"/>
<path d="M676 159.500 L683 147.500 Q684 145.500 687 145.500 H745 Q748 145.500 748 148.500 V159.500z" fill="#d6dcea" stroke="#a9b0c2"/>
<path d="M592 159.500 L599 147.500 Q600 145.500 603 145.500 H674 Q677 145.500 677 148.500 V159.500z" fill="#d6dcea" stroke="#a9b0c2"/>
<path d="M450 159.500 L457 147.500 Q458 145.500 461 145.500 H514.8 Q517.8 145.500 517.8 148.500 V159.500z" fill="#d6dcea" stroke="#a9b0c2"/>
<path d="M393 159.500 L400 147.500 Q401 145.500 404 145.500 H449.5 Q452.5 145.500 452.5 148.500 V159.500z" fill="#d6dcea" stroke="#a9b0c2"/>
<path d="M299.7 159.500 L306.7 147.500 Q307.7 145.500 310.7 145.500 H392.8 Q395.8 145.500 395.8 148.500 V159.500z" fill="#d6dcea" stroke="#a9b0c2"/>
<path d="M252 159.500 L259 147.500 Q260 145.500 263 145.500 H297 Q300 145.500 300 148.500 V159.500z" fill="#d6dcea" stroke="#a9b0c2"/>
<path d="M198 159.500 L205 147.500 Q206 145.500 209 145.500 H249.4 Q252.4 145.500 252.4 148.500 V159.500z" fill="#d6dcea" stroke="#a9b0c2"/>
<path d="M138 159.500 L145 147.500 Q146 145.500 149 145.500 H194.8 Q197.8 145.500 197.8 148.500 V159.500z" fill="#d6dcea" stroke="#a9b0c2"/>
<path d="M79 159.500 L86 147.500 Q87 145.500 90 145.500 H134 Q137 145.500 137 148.500 V159.500z" fill="#d6dcea" stroke="#a9b0c2"/>
<path d="M18.2 159.500 L25.2 147.500 Q26.2 145.500 29.2 145.500 H75.5 Q78.5 145.500 78.5 148.500 V159.500z" fill="#d6dcea" stroke="#a9b0c2"/>
<path d="M515 160.500 L523 146.500 Q524 144.500 527 144.500 H591 Q594 144.500 594 147.500 V160.500z" fill="#f4f5f9" stroke="#a9b0c2"/><path d="M516 160 H593.5" stroke="#f4f5f9" stroke-width="2"/>
<g transform="translate(1290,151.5)" fill="none" stroke="#8a8f99" stroke-width="1"><path d="M7.39 -1.27 L7.39 1.27 L5.33 1.36 L4.73 2.81 L6.12 4.33 L4.33 6.12 L2.81 4.73 L1.36 5.33 L1.27 7.39 L-1.27 7.39 L-1.36 5.33 L-2.81 4.73 L-4.33 6.12 L-6.12 4.33 L-4.73 2.81 L-5.33 1.36 L-7.39 1.27 L-7.39 -1.27 L-5.33 -1.36 L-4.73 -2.81 L-6.12 -4.33 L-4.33 -6.12 L-2.81 -4.73 L-1.36 -5.33 L-1.27 -7.39 L1.27 -7.39 L1.36 -5.33 L2.81 -4.73 L4.33 -6.12 L6.12 -4.33 L4.73 -2.81 L5.33 -1.36 z"/><circle r="2.31"/></g>
</svg>
<span class="t" style="left:28.2px;top:145.8px;font-size:12px;letter-spacing:-0.675px;color:#111;">Standard</span>
<span class="t" style="left:89.0px;top:145.8px;font-size:12px;letter-spacing:-0.622px;color:#111;">CPlanes</span>
<span class="t" style="left:148.0px;top:145.8px;font-size:12px;letter-spacing:-0.542px;color:#111;">Set View</span>
<span class="t" style="left:208.0px;top:145.8px;font-size:12px;letter-spacing:-0.278px;color:#111;">Display</span>
<span class="t" style="left:262.0px;top:145.8px;font-size:12px;letter-spacing:-0.392px;color:#111;">Select</span>
<span class="t" style="left:309.7px;top:145.8px;font-size:12px;letter-spacing:-0.449px;color:#111;">Viewport Layout</span>
<span class="t" style="left:403.0px;top:145.8px;font-size:12px;letter-spacing:-0.062px;color:#111;">Visibility</span>
<span class="t" style="left:460.0px;top:145.8px;font-size:12px;letter-spacing:-0.381px;color:#111;">Transform</span>
<span class="t" style="left:526.0px;top:145.8px;font-size:12px;letter-spacing:-0.285px;color:#111;">Curve Tools</span>
<span class="t" style="left:602.0px;top:145.8px;font-size:12px;letter-spacing:-0.345px;color:#111;">Surface Tools</span>
<span class="t" style="left:686.0px;top:145.8px;font-size:12px;letter-spacing:-0.256px;color:#111;">Solid Tools</span>
<span class="t" style="left:758.0px;top:145.8px;font-size:12px;letter-spacing:-0.347px;color:#111;">Mesh Tools</span>
<span class="t" style="left:832.0px;top:145.8px;font-size:12px;letter-spacing:-0.374px;color:#111;">Render Tools</span>
<span class="t" style="left:916.0px;top:145.8px;font-size:12px;letter-spacing:-0.414px;color:#111;">Drafting</span>
<span class="t" style="left:972.0px;top:145.8px;font-size:12px;letter-spacing:-0.521px;color:#111;">New in V5</span>
<div class="a" style="left:13px;top:200px;width:59px;height:930px;background:#e0e3ec"></div>
<div class="a" style="left:16px;top:203px;width:53px;height:2px;border-top:1px solid #b9bdc9;border-bottom:1px solid #b9bdc9"></div>
<div class="a" style="left:72px;top:200px;width:4px;height:930px;background:#f1f2f6"></div>
<div class="a" style="left:76px;top:200px;width:33px;height:930px;background:#e0e3ec"></div>
<div class="a" style="left:109px;top:200px;width:5px;height:930px;background:#f1f2f6"></div>
<div class="a" style="left:79px;top:205px;width:27px;height:2px;border-top:1px solid #b9bdc9;border-bottom:1px solid #b9bdc9"></div>
<div class="a" style="left:78px;top:616px;width:28px;height:514px;background:#f0f0f2"></div>
<div class="a" style="left:78px;top:210px;width:29px;height:28px;background:#f1f1f3;border:1px solid #c7c9cf"></div>
<div class="a" style="left:78px;top:240px;width:29px;height:28px;background:#f1f1f3;border:1px solid #c7c9cf"></div>
<div class="a" style="left:78px;top:270px;width:29px;height:28px;background:#f1f1f3;border:1px solid #c7c9cf"></div>
<div class="a" style="left:78px;top:300px;width:29px;height:28px;background:#f1f1f3;border:1px solid #c7c9cf"></div>
<div class="a" style="left:78px;top:335px;width:29px;height:28px;background:#f1f1f3;border:1px solid #c7c9cf"></div>
<div class="a" style="left:78px;top:365px;width:29px;height:28px;background:#f1f1f3;border:1px solid #c7c9cf"></div>
<div class="a" style="left:78px;top:395px;width:29px;height:28px;background:#f1f1f3;border:1px solid #c7c9cf"></div>
<div class="a" style="left:78px;top:425px;width:29px;height:28px;background:#f1f1f3;border:1px solid #c7c9cf"></div>
<div class="a" style="left:78px;top:455px;width:29px;height:29px;background:#a9c1e4;border:1px solid #9bb4dc"></div>
<div class="a" style="left:78px;top:492px;width:29px;height:28px;background:#f1f1f3;border:1px solid #c7c9cf"></div>
<div class="a" style="left:78px;top:522px;width:29px;height:28px;background:#f1f1f3;border:1px solid #c7c9cf"></div>
<div class="a" style="left:78px;top:552px;width:29px;height:29px;background:#f1f1f3;border:1px solid #c7c9cf"></div>
<div class="a" style="left:78px;top:583px;width:29px;height:29px;background:#f1f1f3;border:1px solid #c7c9cf"></div>
<svg style="left:0;top:0" width="260" height="1140" viewBox="0 0 260 1140">
<g transform="translate(14.5,210)"><path d="M8 3 V18 L11.500 14.500 L14 20 L16 19 L13.500 13.500 H18z" fill="#fff" stroke="#000" stroke-width="1.100"/></g>
<g transform="translate(42.5,210)"><rect x="3" y="13" width="8" height="8" fill="#fff" stroke="#000" stroke-width="1.100"/><rect x="15" y="2" width="7" height="7" fill="#8fa2ff" stroke="#223" stroke-width="1"/><path d="M10 13 L15 8 M12 8 h3 v3" fill="none" stroke="#000" stroke-width="1.100"/><path d="M19 24 l5 0 0 -5z" fill="#777"/></g>
<g transform="translate(14.5,238)"><rect x="1" y="13" width="13" height="5" fill="#fff" stroke="#000" stroke-width="1.200"/><path d="M11 3 h7 l-3 10 h-4z" fill="#1c2fa8"/><path d="M14 14 l4 -3 5 6 -4 3z" fill="#fff" stroke="#333" stroke-width="1"/></g>
<g transform="translate(42.5,238)"><rect x="2" y="13" width="20" height="5" fill="#fff" stroke="#000" stroke-width="1.200"/><path d="M13 3 h7 l-3 10 h-4z" fill="#1c2fa8"/></g>
<g transform="translate(14.5,266)"><path d="M3 7 l4 -4 3 2 3 -2 3 4 -3 3 2 3 -4 3 -3 -3 -4 1 -2 -4z" fill="#f5a010" stroke="#7a4a00" stroke-width=".8"/><path d="M11 14 l4 -3 3 2 3 -1 2 4 -3 2 1 3 -4 2 -2 -3 -4 0z" fill="#fff" stroke="#555" stroke-width=".8"/></g>
<g transform="translate(42.5,266)"><path d="M2 22 L4 6 L9 13 L17 2 L15 13 L23 11 L16 17 L22 21 L12 19z" fill="#f7a611" stroke="#a85a00" stroke-width=".6"/></g>
<g transform="translate(14.5,294)"><path d="M4 6 C20 4 20 20 4 18" fill="none" stroke="#333" stroke-width="1.100"/><rect x="1.9" y="3.9" width="4.2" height="4.2" fill="#fff" stroke="#000" stroke-width="1.1"/><rect x="14.9" y="0.9" width="4.2" height="4.2" fill="#fff" stroke="#000" stroke-width="1.1"/><rect x="1.9" y="15.9" width="4.2" height="4.2" fill="#fff" stroke="#000" stroke-width="1.1"/><rect x="16.9" y="17.9" width="4.2" height="4.2" fill="#fff" stroke="#000" stroke-width="1.1"/><path d="M19 25 l5 0 0 -5z" fill="#777"/></g>
<g transform="translate(42.5,294)"><path d="M4 5 H18 C21 8 21 16 18 19 H4" fill="none" stroke="#333" stroke-width="1.100" stroke-dasharray="3 1.500"/><rect x="1.9" y="2.9" width="4.2" height="4.2" fill="#fff" stroke="#000" stroke-width="1.1"/><rect x="15.9" y="2.9" width="4.2" height="4.2" fill="#fff" stroke="#000" stroke-width="1.1"/><rect x="1.9" y="16.9" width="4.2" height="4.2" fill="#fff" stroke="#000" stroke-width="1.1"/><rect x="15.9" y="16.9" width="4.2" height="4.2" fill="#fff" stroke="#000" stroke-width="1.1"/></g>
<g transform="translate(14.5,322)"><path d="M3 21 C3 10 8 5 22 5" fill="none" stroke="#000" stroke-width="2"/><rect x="0.9" y="2.9" width="4.2" height="4.2" fill="#fff" stroke="#000" stroke-width="1.1"/><rect x="10.9" y="2.9" width="4.2" height="4.2" fill="#fff" stroke="#000" stroke-width="1.1"/><rect x="19.9" y="2.9" width="4.2" height="4.2" fill="#fff" stroke="#000" stroke-width="1.1"/><rect x="0.9" y="18.9" width="4.2" height="4.2" fill="#fff" stroke="#000" stroke-width="1.1"/></g>
<g transform="translate(42.5,322)"><rect x="2.1" y="5.1" width="3.8" height="3.8" fill="#fff" stroke="#000" stroke-width="1.1"/><rect x="7.1" y="2.1" width="3.8" height="3.8" fill="#fff" stroke="#000" stroke-width="1.1"/><rect x="13.1" y="3.1" width="3.8" height="3.8" fill="#fff" stroke="#000" stroke-width="1.1"/><rect x="17.1" y="8.1" width="3.8" height="3.8" fill="#fff" stroke="#000" stroke-width="1.1"/><rect x="15.1" y="14.1" width="3.8" height="3.8" fill="#fff" stroke="#000" stroke-width="1.1"/><rect x="9.1" y="16.1" width="3.8" height="3.8" fill="#fff" stroke="#000" stroke-width="1.1"/><rect x="2.1" y="15.1" width="3.8" height="3.8" fill="#fff" stroke="#000" stroke-width="1.1"/></g>
<g transform="translate(14.5,350)"><path d="M4 10 C6 4 12 4 11 12 S17 4 16 14 S23 8 20 19" fill="none" stroke="#444" stroke-width="1"/><path d="M5 13 C8 20 12 20 11 12" fill="none" stroke="#999" stroke-width="1"/><rect x="1.25" y="8.25" width="3.5" height="3.5" fill="#fff" stroke="#000" stroke-width="1.1"/><rect x="16.25" y="19.25" width="3.5" height="3.5" fill="#fff" stroke="#000" stroke-width="1.1"/></g>
<g transform="translate(42.5,350)"><path d="M7 3 C12 10 14 18 11 20 H4 M11 20 H21" fill="none" stroke="#000" stroke-width="1.100"/><rect x="4.9" y="0.9" width="4.2" height="4.2" fill="#fff" stroke="#000" stroke-width="1.1"/><rect x="1.9" y="17.9" width="4.2" height="4.2" fill="#fff" stroke="#000" stroke-width="1.1"/><rect x="18.9" y="17.9" width="4.2" height="4.2" fill="#fff" stroke="#000" stroke-width="1.1"/></g>
<g transform="translate(14.5,378)"><path d="M5 21 L10 7 L20 18" fill="none" stroke="#000" stroke-width="1.100"/><circle cx="10" cy="7" r="1.800" fill="#fff" stroke="#000"/><circle cx="5" cy="21" r="1.800" fill="#fff" stroke="#000"/><circle cx="20" cy="18" r="1.800" fill="#fff" stroke="#000"/><path d="M19 24 l5 0 0 -5z" fill="#777"/></g>
<g transform="translate(42.5,378)"><path d="M6 19 L19 8" stroke="#000" stroke-width="1.200"/><rect x="3.9" y="16.9" width="4.2" height="4.2" fill="#fff" stroke="#000" stroke-width="1.1"/><rect x="16.9" y="5.9" width="4.2" height="4.2" fill="#fff" stroke="#000" stroke-width="1.1"/></g>
<g transform="translate(14.5,406)"><path d="M1 4 C10 6 10 20 22 23" fill="none" stroke="#fff" stroke-width="2"/><path d="M11 9 V19" stroke="#000" stroke-width="1.200"/><rect x="8.9" y="6.9" width="4.2" height="4.2" fill="#fff" stroke="#000" stroke-width="1.1"/><rect x="8.9" y="16.9" width="4.2" height="4.2" fill="#fff" stroke="#000" stroke-width="1.1"/></g>
<g transform="translate(42.5,406)"><path d="M1 2 C10 6 12 18 22 22" fill="none" stroke="#fff" stroke-width="2"/><path d="M10 12 H21" stroke="#000" stroke-width="1.200"/><rect x="7.9" y="9.9" width="4.2" height="4.2" fill="#fff" stroke="#000" stroke-width="1.1"/><rect x="18.9" y="9.9" width="4.2" height="4.2" fill="#fff" stroke="#000" stroke-width="1.1"/></g>
<g transform="translate(14.5,434)"><path d="M2 14 L20 8" stroke="#2a9a2a" stroke-width="1.200"/><path d="M2 14 L20 21" stroke="#e02020" stroke-width="1.200"/><path d="M20 8 l-3 -0.500 1 2.500z" fill="#2a9a2a"/><path d="M20 21 l-3 0.500 1 -2.500z" fill="#e02020"/><circle cx="2.500" cy="14" r="1.500"/><path d="M13 4 V13" stroke="#000" stroke-width="1.200"/><rect x="10.9" y="1.9" width="4.2" height="4.2" fill="#fff" stroke="#000" stroke-width="1.1"/><rect x="10.9" y="10.9" width="4.2" height="4.2" fill="#fff" stroke="#000" stroke-width="1.1"/></g>
<g transform="translate(42.5,434)"><circle cx="14" cy="15" r="7.500" fill="#eee" stroke="#000" stroke-width="1.200"/><path d="M5 4 L14 13" stroke="#000" stroke-width="1.200"/><rect x="2.9" y="1.9" width="4.2" height="4.2" fill="#fff" stroke="#000" stroke-width="1.1"/><rect x="11.9" y="10.9" width="4.2" height="4.2" fill="#fff" stroke="#000" stroke-width="1.1"/></g>
<g transform="translate(14.5,462)"><circle cx="11" cy="12" r="9" fill="none" stroke="#222" stroke-width="1.100"/><path d="M11 12 L18 6" stroke="#000" stroke-width="1.100"/><circle cx="11" cy="12" r="1.500" fill="#fff" stroke="#000"/><circle cx="18" cy="6" r="1.500" fill="#fff" stroke="#000"/><path d="M19 24 l5 0 0 -5z" fill="#777"/></g>
<g transform="translate(42.5,462)"><circle cx="12" cy="12" r="8" fill="none" stroke="#222" stroke-width="1.100"/><rect x="2.9" y="3.9" width="4.2" height="4.2" fill="#fff" stroke="#000" stroke-width="1.1"/><rect x="9.9" y="9.9" width="4.2" height="4.2" fill="#fff" stroke="#000" stroke-width="1.1"/><path d="M3 4 l4 -3 M18 2 l4 3 M3 21 l4 3 M18 23 l4 -3" stroke="#fff" stroke-width="1.500"/></g>
<g transform="translate(14.5,490)"><circle cx="11" cy="12" r="9" fill="none" stroke="#222" stroke-width="1.100"/><path d="M4 18 L18 6" stroke="#555" stroke-width="1"/><rect x="1.9" y="15.9" width="4.2" height="4.2" fill="#fff" stroke="#000" stroke-width="1.1"/><rect x="15.9" y="2.9" width="4.2" height="4.2" fill="#fff" stroke="#000" stroke-width="1.1"/></g>
<g transform="translate(42.5,490)"><circle cx="11" cy="12" r="8" fill="none" stroke="#222" stroke-width="1.100"/><path d="M2 14 L20 8" stroke="#2a9a2a" stroke-width="1.200"/><path d="M2 14 L20 21" stroke="#e02020" stroke-width="1.200"/><path d="M20 8 l-3 -0.500 1 2.500z" fill="#2a9a2a"/><path d="M20 21 l-3 0.500 1 -2.500z" fill="#e02020"/><circle cx="2.500" cy="14" r="1.500"/><rect x="9.9" y="10.9" width="4.2" height="4.2" fill="#fff" stroke="#000" stroke-width="1.1"/><rect x="17.9" y="10.9" width="4.2" height="4.2" fill="#fff" stroke="#000" stroke-width="1.1"/></g>
<g transform="translate(14.5,518)"><path d="M5 3 C14 4 20 8 22 14 L5 21z" fill="none" stroke="#222" stroke-width="1.100"/><circle cx="5" cy="3" r="1.500" fill="#fff" stroke="#000"/><circle cx="5" cy="21" r="1.500" fill="#fff" stroke="#000"/><circle cx="21" cy="13" r="1.500" fill="#fff" stroke="#000"/><path d="M19 24 l5 0 0 -5z" fill="#777"/></g>
<g transform="translate(42.5,518)"><path d="M4 4 C14 5 20 12 21 21" fill="none" stroke="#222" stroke-width="1.100"/><rect x="1.9" y="1.9" width="4.2" height="4.2" fill="#fff" stroke="#000" stroke-width="1.1"/><rect x="10.9" y="3.9" width="4.2" height="4.2" fill="#fff" stroke="#000" stroke-width="1.1"/><rect x="18.9" y="18.9" width="4.2" height="4.2" fill="#fff" stroke="#000" stroke-width="1.1"/></g>
<g transform="translate(14.5,546)"><path d="M4 4 C12 6 20 12 21 21" fill="none" stroke="#222" stroke-width="1.100"/><rect x="1.9" y="1.9" width="4.2" height="4.2" fill="#fff" stroke="#000" stroke-width="1.1"/><rect x="17.9" y="1.9" width="4.2" height="4.2" fill="#fff" stroke="#000" stroke-width="1.1"/><rect x="17.9" y="18.9" width="4.2" height="4.2" fill="#fff" stroke="#000" stroke-width="1.1"/></g>
<g transform="translate(42.5,546)"><rect x="8.1" y="6.1" width="3.8" height="3.8" fill="#fff" stroke="#000" stroke-width="1.1"/><rect x="15.1" y="4.1" width="3.8" height="3.8" fill="#fff" stroke="#000" stroke-width="1.1"/><rect x="10.1" y="11.1" width="3.8" height="3.8" fill="#fff" stroke="#000" stroke-width="1.1"/><rect x="15.1" y="15.1" width="3.8" height="3.8" fill="#fff" stroke="#000" stroke-width="1.1"/><path d="M4 10 l4 -1 M20 13 l3 2 M14 22 l2 2" stroke="#fff" stroke-width="1.500"/></g>
<g transform="translate(14.5,574)"><ellipse cx="12" cy="13" rx="10" ry="6.500" fill="none" stroke="#222" stroke-width="1.100"/><path d="M2 13 H22" stroke="#555" stroke-width=".8"/><rect x="9.9" y="3.9" width="4.2" height="4.2" fill="#fff" stroke="#000" stroke-width="1.1"/><rect x="9.9" y="10.9" width="4.2" height="4.2" fill="#fff" stroke="#000" stroke-width="1.1"/><rect x="18.9" y="10.9" width="4.2" height="4.2" fill="#fff" stroke="#000" stroke-width="1.1"/><path d="M19 26 l5 0 0 -5z" fill="#777"/></g>
<g transform="translate(42.5,574)"><ellipse cx="12" cy="13" rx="10" ry="6.500" fill="none" stroke="#222" stroke-width="1.100"/><path d="M2 13 H22" stroke="#555" stroke-width=".8"/><rect x="9.9" y="3.9" width="4.2" height="4.2" fill="#fff" stroke="#000" stroke-width="1.1"/><rect x="0.9" y="10.9" width="4.2" height="4.2" fill="#fff" stroke="#000" stroke-width="1.1"/><rect x="18.9" y="10.9" width="4.2" height="4.2" fill="#fff" stroke="#000" stroke-width="1.1"/></g>
<g transform="translate(14.5,602)"><rect x="3" y="5" width="17" height="12" fill="none" stroke="#000" stroke-width="1.300"/><circle cx="20" cy="5" r="1.500" fill="#fff" stroke="#000"/><circle cx="3" cy="17" r="1.500" fill="#fff" stroke="#000"/><path d="M19 24 l5 0 0 -5z" fill="#777"/></g>
<g transform="translate(42.5,602)"><rect x="3" y="5" width="17" height="12" fill="none" stroke="#000" stroke-width="1.300"/><rect x="0.9" y="2.9" width="4.2" height="4.2" fill="#fff" stroke="#000" stroke-width="1.1"/><rect x="0.9" y="13.9" width="4.2" height="4.2" fill="#fff" stroke="#000" stroke-width="1.1"/><rect x="17.9" y="9.9" width="4.2" height="4.2" fill="#fff" stroke="#000" stroke-width="1.1"/></g>
<g transform="translate(14.5,630)"><rect x="3" y="5" width="18" height="13" rx="4" fill="none" stroke="#000" stroke-width="1.300"/><rect x="0.9" y="2.9" width="4.2" height="4.2" fill="#fff" stroke="#000" stroke-width="1.1"/><rect x="5.9" y="2.9" width="4.2" height="4.2" fill="#fff" stroke="#000" stroke-width="1.1"/><rect x="0.9" y="7.9" width="4.2" height="4.2" fill="#fff" stroke="#000" stroke-width="1.1"/></g>
<g transform="translate(42.5,630)"><rect x="6" y="3" width="11" height="17" fill="none" stroke="#000" stroke-width="1.300"/><path d="M3 12 L20 8" stroke="#2a9a2a" stroke-width="1.200"/><path d="M3 12 L20 21" stroke="#e02020" stroke-width="1.200"/><path d="M20 8 l-3 -0.500 1 2.500z" fill="#2a9a2a"/><path d="M20 21 l-3 0.500 1 -2.500z" fill="#e02020"/><circle cx="3" cy="12" r="1.500"/><rect x="3.9" y="0.9" width="4.2" height="4.2" fill="#fff" stroke="#000" stroke-width="1.1"/><rect x="3.9" y="17.9" width="4.2" height="4.2" fill="#fff" stroke="#000" stroke-width="1.1"/><rect x="13.9" y="6.9" width="4.2" height="4.2" fill="#fff" stroke="#000" stroke-width="1.1"/></g>
<g transform="translate(14.5,658)"><path d="M7 4 h9 l5 8 -5 8 h-9 l-5 -8z" fill="none" stroke="#000" stroke-width="1.200"/><path d="M11 12 h9" stroke="#000"/><circle cx="11" cy="12" r="1.500" fill="#fff" stroke="#000"/><circle cx="20" cy="12" r="1.500" fill="#fff" stroke="#000"/><path d="M19 24 l5 0 0 -5z" fill="#777"/></g>
<g transform="translate(42.5,658)"><rect x="4" y="5" width="15" height="15" fill="none" stroke="#000" stroke-width="1.300"/><path d="M12 12 L19 5" stroke="#555" stroke-width=".9"/><rect x="9.9" y="9.9" width="4.2" height="4.2" fill="#fff" stroke="#000" stroke-width="1.1"/><rect x="16.9" y="2.9" width="4.2" height="4.2" fill="#fff" stroke="#000" stroke-width="1.1"/></g>
<g transform="translate(14.5,686)"><rect x="5" y="6" width="14" height="15" fill="none" stroke="#000" stroke-width="1.300"/><rect x="2.9" y="3.9" width="4.2" height="4.2" fill="#fff" stroke="#000" stroke-width="1.1"/><rect x="16.9" y="3.9" width="4.2" height="4.2" fill="#fff" stroke="#000" stroke-width="1.1"/></g>
<g transform="translate(42.5,686)"><path d="M10 3 l3 6 h8 l-6 5 3 8 -8 -5 -6 3 2 -7 -5 -4 h7z" fill="none" stroke="#222" stroke-width="1.100"/><rect x="17.25" y="4.25" width="3.5" height="3.5" fill="#fff" stroke="#000" stroke-width="1.1"/><rect x="10.25" y="10.25" width="3.5" height="3.5" fill="#fff" stroke="#000" stroke-width="1.1"/><rect x="15.25" y="10.25" width="3.5" height="3.5" fill="#fff" stroke="#000" stroke-width="1.1"/></g>
<circle cx="92.5" cy="224" r="9.500" fill="#fff" stroke="#b0141c" stroke-width="2.600"/><rect x="91" y="218.5" width="3" height="11" rx="1.500" fill="#b0141c"/>
<path d="M92.5 243 l2 9 -2 3 -2 -3z M92.5 255 l-9 6 1 -3 6 -5z M92.5 255 l9 6 -1 -3 -6 -5z" fill="#a5a5a5" stroke="#8b8b8b" stroke-width=".6"/>
<circle cx="92.5" cy="284" r="9" fill="none" stroke="#a0a0a0" stroke-width="1.400"/><ellipse cx="92.5" cy="284" rx="4" ry="9" fill="none" stroke="#a0a0a0" stroke-width="1.200"/><ellipse cx="92.5" cy="285" rx="11" ry="3" fill="none" stroke="#a0a0a0" stroke-width="1.400"/>
<path d="M92.5 308 v8 l-7 5 M92.5 316 l7 5" stroke="#a5a5a5" stroke-width="1.500" fill="none"/><rect x="89.5" y="304" width="6" height="6" fill="#b5b5b5"/><path d="M82.5 318 l4 -2 3 3 -3 4 -4 -1z M96.5 318 l4 -1 2 4 -4 3 -3 -2z" fill="#a0a0a0"/>
<path d="M92.5 339 v20 M82.5 349 h20 M92.5 349 l-8 8 M92.5 349 l5 -5" stroke="#555" stroke-width="1.100" fill="none"/><path d="M92.5 338 l2 4 h-4z M92.5 360 l2 -4 h-4z M103.5 349 l-4 2 v-4z M81.5 349 l4 2 v-4z" fill="#555"/><rect x="90.5" y="347" width="4" height="4" fill="#fff" stroke="#333"/>
<path d="M83.5 373 l10 -3 7 3 v13 l-9 4 -8 -4z" fill="#b9b9b9" stroke="#555" stroke-width="1"/><path d="M83.5 373 l8 3 9 -3 M91.5 376 v14" fill="none" stroke="#555" stroke-width="1"/><path d="M91.5 376 v14 l9 -4 v-13z" fill="#8f8f8f"/><circle cx="83.5" cy="373" r="2" fill="#555"/><circle cx="93.5" cy="370" r="2" fill="#555"/><circle cx="100.5" cy="373" r="2" fill="#555"/><circle cx="91.5" cy="376" r="2" fill="#555"/><circle cx="83.5" cy="386" r="2" fill="#555"/><circle cx="91.5" cy="390" r="2" fill="#555"/><circle cx="100.5" cy="386" r="2" fill="#555"/>
<path d="M83.5 403 l10 -3 7 3 v13 l-9 4 -8 -4z" fill="#b9b9b9" stroke="#555" stroke-width="1"/><path d="M83.5 403 l8 3 9 -3 M91.5 406 v14" fill="none" stroke="#555" stroke-width="1"/><path d="M91.5 406 v14 l9 -4 v-13z" fill="#8f8f8f"/><circle cx="83.5" cy="403" r="2" fill="#555"/><circle cx="93.5" cy="400" r="2" fill="#555"/><circle cx="100.5" cy="403" r="2" fill="#555"/><circle cx="91.5" cy="406" r="2" fill="#555"/><circle cx="83.5" cy="416" r="2" fill="#555"/><circle cx="91.5" cy="420" r="2" fill="#555"/><circle cx="100.5" cy="416" r="2" fill="#555"/>
<path d="M83.5 433 l10 -3 7 3 v13 l-9 4 -8 -4z" fill="#b9b9b9" stroke="#555" stroke-width="1"/><path d="M83.5 433 l8 3 9 -3 M91.5 436 v14" fill="none" stroke="#555" stroke-width="1"/><path d="M91.5 436 v14 l9 -4 v-13z" fill="#8f8f8f"/><circle cx="83.5" cy="433" r="2" fill="#555"/><circle cx="93.5" cy="430" r="2" fill="#555"/><circle cx="100.5" cy="433" r="2" fill="#555"/><circle cx="91.5" cy="436" r="2" fill="#555"/><circle cx="83.5" cy="446" r="2" fill="#555"/><circle cx="91.5" cy="450" r="2" fill="#555"/><circle cx="100.5" cy="446" r="2" fill="#555"/>
<path d="M83.5 463.5 l10 -3 7 3 v13 l-9 4 -8 -4z" fill="#b9b9b9" stroke="#555" stroke-width="1"/><path d="M83.5 463.5 l8 3 9 -3 M91.5 466.5 v14" fill="none" stroke="#555" stroke-width="1"/><path d="M91.5 466.5 v14 l9 -4 v-13z" fill="#8f8f8f"/><circle cx="83.5" cy="463.5" r="2" fill="#555"/><circle cx="93.5" cy="460.5" r="2" fill="#555"/><circle cx="100.5" cy="463.5" r="2" fill="#555"/><circle cx="91.5" cy="466.5" r="2" fill="#555"/><circle cx="83.5" cy="476.5" r="2" fill="#555"/><circle cx="91.5" cy="480.5" r="2" fill="#555"/><circle cx="100.5" cy="476.5" r="2" fill="#555"/>
<circle cx="96.5" cy="376" r="2.500" fill="#fff" stroke="#555"/>
<rect x="95.5" y="408" width="2" height="9" fill="#fff"/>
<path d="M84.5 499 l6 -3 5 8 -5 4z" fill="#c4c4c4" stroke="#999" stroke-width="1"/><path d="M92.5 508 l8 7 M101.5 515 l-1 -5 -5 2" stroke="#aaa" stroke-width="2" fill="none"/><path d="M89.5 511 c-5 -1 -5 6 0 5" stroke="#999" stroke-width="2" fill="none"/>
<path d="M84.5 530 l10 -4 5 8 -10 5z" fill="#cfcfcf" stroke="#999"/><path d="M90.5 537 l9 -3 3 8 -7 6 -5 -4z" fill="#b5b5b5" stroke="#888"/><circle cx="89.5" cy="535" r="1.800" fill="#fff" stroke="#666"/>
<path d="M87.5 556.5 h10 l5 5 v10 l-5 5 h-10 l-5 -5 v-10z" fill="#b9b9b9" stroke="#666" stroke-width="1.500"/><path d="M87.5 561.5 l10 10 M97.5 561.5 l-10 10" stroke="#9a9a9a" stroke-width="3"/>
<path d="M102.79 595.41 L102.79 599.59 L99.67 599.72 L99.13 601.00 L101.25 603.30 L98.30 606.25 L96.00 604.13 L94.72 604.67 L94.59 607.79 L90.41 607.79 L90.28 604.67 L89.00 604.13 L86.70 606.25 L83.75 603.30 L85.87 601.00 L85.33 599.72 L82.21 599.59 L82.21 595.41 L85.33 595.28 L85.87 594.00 L83.75 591.70 L86.70 588.75 L89.00 590.87 L90.28 590.33 L90.41 587.21 L94.59 587.21 L94.72 590.33 L96.00 590.87 L98.30 588.75 L101.25 591.70 L99.13 594.00 L99.67 595.28 z" fill="#e43de4" stroke="#5c0a5c" stroke-width="1.100"/><rect x="90" y="593.5" width="5" height="8" rx="1" fill="#999" stroke="#333" stroke-width=".8"/>
</svg>
<span class="t" style="left:121.0px;top:202.1px;font-size:12px;letter-spacing:-0.248px;color:#111;">RhinoCAM 2014 - ...</span>
<svg style="left:239px;top:204px" width="12" height="12"><path d="M2.500 2.500 L8.500 8.500 M8.500 2.500 L2.500 8.500" stroke="#b9bcc4" stroke-width="1.800"/></svg>
<div class="a" style="left:117px;top:218px;width:135px;height:890px;background:#fff;border:1px solid #9a9ea8"></div>
<div class="a" style="left:118px;top:219px;width:133px;height:99px;background:#f0f0f0;border-bottom:1px solid #8f939c"></div>
<div class="a" style="left:118px;top:1109px;width:133px;height:17px;background:linear-gradient(180deg,#b4b6ba,#cfd0d4 50%,#e0e1e5)"></div>
<div class="a" style="left:125px;top:221px;width:67px;height:28px;background:#fbfbfb;border:1px solid #b8bcc4;border-bottom:none;border-radius:3px 3px 0 0"></div>
<div class="a" style="left:118px;top:248px;width:8px;height:1px;background:#b8bcc4"></div>
<span class="t" style="left:157.0px;top:227.6px;font-size:12px;letter-spacing:0.198px;color:#1e3287;">Tools</span>
<svg style="left:0;top:0" width="260" height="345" viewBox="0 0 260 345">
<defs><linearGradient id="mt" x1="0" x2="1"><stop offset="0" stop-color="#8b8b8b"/><stop offset=".45" stop-color="#f4f4f4"/><stop offset="1" stop-color="#7c7c7c"/></linearGradient></defs>
<g transform="translate(140,235) scale(1.05)"><path d="M-6 -9 h12 v3 c0 3 -3 3 -3 6 v8 c0 2 -6 2 -6 0 v-8 c0 -3 -3 -3 -3 -6z" fill="url(#mt)" stroke="#666" stroke-width=".7"/></g><rect x="146" y="229" width="4" height="13" fill="#9a9a9a" stroke="#555" stroke-width=".6"/><path d="M144 243 l4 -2 1 2 -4 3z" fill="#f0c419" stroke="#7a6200" stroke-width=".5"/>
<path d="M210 226 c-12 3 -12 17 0 20" fill="none" stroke="#000" stroke-width="2.600"/><path d="M203 229 c-5 5 -5 9 -1 14" fill="none" stroke="#999" stroke-width="1.500"/><rect x="204.500" y="224.500" width="5" height="5" fill="#fff" stroke="#d01818" stroke-width="1.200"/>
<path d="M220.500 229 l-4 4 4 4z" fill="#fff" stroke="#333" stroke-width=".9"/><path d="M229.500 228 l5 5 -5 5z" fill="#000"/>
<g transform="translate(137,266) scale(1)"><path d="M-6 -9 h12 v3 c0 3 -3 3 -3 6 v8 c0 2 -6 2 -6 0 v-8 c0 -3 -3 -3 -3 -6z" fill="url(#mt)" stroke="#666" stroke-width=".7"/></g>
<path d="M153.500 254 v26 M153.500 288 v28" stroke="#c5c5c5"/><path d="M125 283.500 h125" stroke="#d5d5d5"/>
<rect x="160" y="263" width="13" height="13" rx="1.500" fill="#4a57c8" stroke="#27308a" stroke-width=".7"/><rect x="162" y="263" width="9" height="5" fill="#e8eaf6"/><g transform="translate(175,266) scale(0.9)"><path d="M-6 -9 h12 v3 c0 3 -3 3 -3 6 v8 c0 2 -6 2 -6 0 v-8 c0 -3 -3 -3 -3 -6z" fill="url(#mt)" stroke="#666" stroke-width=".7"/></g><rect x="170" y="262" width="4" height="13" fill="#9a9a9a" stroke="#555" stroke-width=".6"/><path d="M168 276 l4 -2 1 2 -4 3z" fill="#f0c419" stroke="#7a6200" stroke-width=".5"/><path d="M165 258 c2 -5 8 -5 10 -1 l2 -2 0 6 -6 0 2 -2 c-2 -2 -5 -2 -6 1z" fill="#2a62d8"/>
<rect x="190" y="263" width="13" height="13" rx="1.500" fill="#4a57c8" stroke="#27308a" stroke-width=".7"/><rect x="192" y="263" width="9" height="5" fill="#e8eaf6"/><g transform="translate(205,266) scale(0.9)"><path d="M-6 -9 h12 v3 c0 3 -3 3 -3 6 v8 c0 2 -6 2 -6 0 v-8 c0 -3 -3 -3 -3 -6z" fill="url(#mt)" stroke="#666" stroke-width=".7"/></g><rect x="200" y="262" width="4" height="13" fill="#9a9a9a" stroke="#555" stroke-width=".6"/><path d="M198 276 l4 -2 1 2 -4 3z" fill="#f0c419" stroke="#7a6200" stroke-width=".5"/><path d="M192 256 h6 v-3 l6 5 -6 5 v-3 h-6z" fill="#2fb540" stroke="#157022" stroke-width=".5"/>
<rect x="220" y="263" width="13" height="13" rx="1.500" fill="#4a57c8" stroke="#27308a" stroke-width=".7"/><rect x="222" y="263" width="9" height="5" fill="#e8eaf6"/><g transform="translate(235,266) scale(0.9)"><path d="M-6 -9 h12 v3 c0 3 -3 3 -3 6 v8 c0 2 -6 2 -6 0 v-8 c0 -3 -3 -3 -3 -6z" fill="url(#mt)" stroke="#666" stroke-width=".7"/></g><rect x="230" y="262" width="4" height="13" fill="#9a9a9a" stroke="#555" stroke-width=".6"/><path d="M228 276 l4 -2 1 2 -4 3z" fill="#f0c419" stroke="#7a6200" stroke-width=".5"/><path d="M237 258 c-2 -5 -8 -5 -10 -1 l-2 -2 0 6 6 0 -2 -2 c2 -2 5 -2 6 1z" fill="#2a62d8"/>
<rect x="126.500" y="288.500" width="21" height="27" fill="#f7f7f7" stroke="#9a9a9a"/>
<path d="M131 291 h8 l4 4 v12 h-12z" fill="#e0e0e0" stroke="#999" stroke-width=".6"/><rect x="130" y="293" width="3.500" height="10" fill="#d21a1a"/><rect x="130" y="305" width="3.500" height="3" fill="#d21a1a"/><g transform="translate(141,303) scale(0.85)"><path d="M-6 -9 h12 v3 c0 3 -3 3 -3 6 v8 c0 2 -6 2 -6 0 v-8 c0 -3 -3 -3 -3 -6z" fill="url(#mt)" stroke="#666" stroke-width=".7"/></g><rect x="136" y="298" width="4" height="13" fill="#9a9a9a" stroke="#555" stroke-width=".6"/><path d="M134 312 l4 -2 1 2 -4 3z" fill="#f0c419" stroke="#7a6200" stroke-width=".5"/>
<path d="M161 289 l3 4 4 -3 -1 5 5 1 -4 3 2 5 -5 -2 -2 4 -1 -6 -5 0 4 -3z" fill="#f79a11" stroke="#d04a00" stroke-width=".6"/><g transform="translate(177,303) scale(0.95)"><path d="M-6 -9 h12 v3 c0 3 -3 3 -3 6 v8 c0 2 -6 2 -6 0 v-8 c0 -3 -3 -3 -3 -6z" fill="url(#mt)" stroke="#666" stroke-width=".7"/></g>
<path d="M133 329.500 h13" stroke="#555" stroke-dasharray="1 1"/>
<rect x="147.500" y="321.500" width="11" height="4" fill="#ddd" stroke="#222" stroke-width="1"/><rect x="149.500" y="325.500" width="6" height="10" rx="1" fill="url(#mt)" stroke="#222" stroke-width="1"/><rect x="158.500" y="324.500" width="4" height="9" fill="#ccc" stroke="#333" stroke-width=".8"/><path d="M158 333 l4 -1 0 3 -3 2z" fill="#f0c419" stroke="#7a6200" stroke-width=".5"/>
</svg>
<div class="a" style="left:167px;top:320px;width:37px;height:18px;background:#c9c9c9"></div>
<span class="t" style="left:170.0px;top:321.6px;font-size:12px;font-weight:bold;letter-spacing:-0.021px;color:#111;">Tools</span>
<div class="a" style="left:258px;top:199px;width:842px;height:913px;background:#eef0f4"></div>
<svg style="left:0;top:0" width="1110" height="1120" viewBox="0 0 1110 1120">
<defs>
<clipPath id="c_top"><rect x="260" y="201" width="427" height="455"/></clipPath>
<clipPath id="c_persp"><rect x="690" y="201" width="408" height="455"/></clipPath>
<clipPath id="c_front"><rect x="260" y="659" width="427" height="452"/></clipPath>
<clipPath id="c_right"><rect x="690" y="659" width="408" height="452"/></clipPath>
<linearGradient id="blu" x1="0" y1="0" x2="0" y2="1"><stop offset="0" stop-color="#27b6f5"/><stop offset="1" stop-color="#149fe6"/></linearGradient>
</defs>
<g clip-path="url(#c_top)"><rect x="260" y="201" width="427" height="455" fill="#9fa5ab"/><path d="M253.5 201 V656 M279.5 201 V656 M305.5 201 V656 M331.5 201 V656 M383.5 201 V656 M409.5 201 V656 M435.5 201 V656 M461.5 201 V656 M513.5 201 V656 M539.5 201 V656 M565.5 201 V656 M591.5 201 V656 M643.5 201 V656 M669.5 201 V656 M695.5 201 V656 M721.5 201 V656 M260 159.5 H687 M260 211.5 H687 M260 237.5 H687 M260 263.5 H687 M260 289.5 H687 M260 341.5 H687 M260 367.5 H687 M260 393.5 H687 M260 419.5 H687 M260 471.5 H687 M260 497.5 H687 M260 523.5 H687 M260 549.5 H687 M260 601.5 H687 M260 627.5 H687 M260 653.5 H687 M260 679.5 H687 " stroke="#959ba1" stroke-width="1" fill="none"/><path d="M227.5 201 V656 M357.5 201 V656 M487.5 201 V656 M617.5 201 V656 M260 185.5 H687 M260 315.5 H687 M260 445.5 H687 M260 575.5 H687 M260 705.5 H687 " stroke="#868c92" stroke-width="1" fill="none"/>
<path d="M357.5 201 V575" stroke="#459a48" stroke-width="1.600"/><path d="M357 575.5 H687" stroke="#98464a" stroke-width="1.600"/>
<path d="M356.8 376.4 C362.4 375.4 366.6 378.6 369.4 385.0 C372.1 391.3 372.8 400.3 373.3 414.3 C373.7 428.4 372.4 449.6 372.1 469.2 C371.8 488.8 371.9 516.2 371.3 531.9 C370.7 547.5 370.5 554.7 368.6 563.2 C366.7 571.7 364.9 578.1 360.0 582.8 C355.1 587.5 347.9 590.7 339.2 591.4 C330.5 592.0 315.6 590.7 307.9 586.7 C300.2 582.6 295.5 574.9 293.0 567.1 C290.5 559.3 290.8 553.4 293.0 539.7 C295.1 526.0 301.2 503.1 305.9 484.9 C310.7 466.6 316.6 445.7 321.6 430.0 C326.6 414.3 330.2 399.8 336.1 390.8 C342.0 381.9 351.3 377.3 356.8 376.4 z" fill="none" stroke="#5be34a" stroke-width="1.500"/>
<path d="M411.7 360.3 C417.2 356.8 428.7 355.3 439.1 354.0 C449.5 352.8 462.6 352.9 474.3 352.9 C486.1 352.9 500.1 353.1 509.6 354.0 C519.1 354.9 525.8 355.1 531.1 358.3 C536.5 361.5 538.1 363.9 541.7 373.2 C545.3 382.6 549.6 398.4 552.7 414.3 C555.8 430.3 559.5 451.6 560.5 469.2 C561.6 486.8 561.0 506.5 559.0 520.1 C556.9 533.7 554.3 542.5 548.0 550.7 C541.7 558.8 533.6 564.9 521.4 569.1 C509.1 573.2 490.7 575.4 474.3 575.7 C458.0 576.1 437.0 575.1 423.4 571.0 C409.9 567.0 400.1 559.9 392.9 551.4 C385.7 543.0 382.1 533.8 380.3 520.1 C378.6 506.4 379.9 486.8 382.3 469.2 C384.7 451.6 390.9 430.0 394.8 414.3 C398.8 398.7 403.0 384.2 405.8 375.2 C408.6 366.2 406.1 363.8 411.7 360.3 z" fill="none" stroke="#5be34a" stroke-width="1.500"/>
<path d="M587.9 387.7 C592.6 383.7 605.0 383.5 611.4 384.6 C617.8 385.6 622.1 386.4 626.3 394.0 C630.6 401.6 633.2 414.9 636.9 430.0 C640.6 445.2 644.4 468.5 648.7 484.9 C652.9 501.2 659.0 516.2 662.4 527.9 C665.7 539.7 668.0 547.2 668.6 555.4 C669.3 563.5 669.3 571.4 666.3 576.9 C663.3 582.5 657.1 586.4 650.6 588.7 C644.1 590.9 635.5 591.9 627.1 590.6 C618.8 589.3 606.6 586.0 600.5 580.8 C594.3 575.6 592.7 571.4 590.3 559.3 C587.9 547.2 586.7 527.3 586.0 508.4 C585.3 489.4 586.4 462.3 586.0 445.7 C585.5 429.0 582.9 418.1 583.2 408.5 C583.6 398.8 583.2 391.7 587.9 387.7 z" fill="none" stroke="#5be34a" stroke-width="1.500"/>
<path d="M357.6 574.2 C362.1 565.2 373.3 542.8 384.3 520.1 C395.2 497.4 412.3 462.7 423.4 437.9 C434.5 413.0 443.8 388.1 450.8 371.3 C457.9 354.4 461.8 344.1 465.7 336.8 C469.6 329.5 471.3 327.5 474.3 327.4 C477.4 327.3 480.1 328.7 484.1 336.0 C488.2 343.3 492.4 352.3 498.6 371.3 C504.8 390.2 513.6 423.5 521.4 449.6 C529.1 475.7 537.7 506.6 544.9 527.9 C552.0 549.3 561.2 569.4 564.4 577.7 " fill="none" stroke="#1fb2f7" stroke-width="1.800"/>
<path d="M386.2 574.2 C391.8 563.2 408.7 531.1 419.5 508.4 C430.3 485.6 442.9 455.5 450.8 437.9 C458.8 420.2 462.9 410.2 467.3 402.6 C471.7 395.0 473.7 392.0 477.1 392.0 C480.5 392.0 482.9 393.7 487.7 402.6 C492.4 411.5 499.4 426.8 505.7 445.7 C512.0 464.6 520.6 494.5 525.3 516.2 C530.0 537.9 532.5 565.8 533.9 575.7 " fill="none" stroke="#1fb2f7" stroke-width="1.800"/>
<path d="M371.7 574.2 C377.1 563.8 392.6 535.6 403.8 512.3 C415.1 488.9 429.3 456.1 439.1 433.9 C448.9 411.7 456.5 391.5 462.6 379.1 C468.7 366.7 471.0 359.5 475.5 359.5 C480.1 359.5 484.3 366.7 490.0 379.1 C495.7 391.5 502.4 410.4 509.6 433.9 C516.8 457.4 526.6 496.3 533.1 520.1 C539.6 543.9 546.2 567.1 548.8 576.5 " fill="none" stroke="#1fb2f7" stroke-width="1" stroke-dasharray="1.500 1"/>
<path d="M357.6 574.2 L386.2 574.2 M533.9 575.7 L564.4 577.7" stroke="#1fb2f7" stroke-width="1.800"/>
<path d="M475.5 327.4 L477.1 392.0 M433.2 416.3 L442.2 439.8 M513.5 418.3 L505.7 439.8" stroke="#1fb2f7" stroke-width="1"/>
<path d="M296.5 591 V620.5 H325" fill="none" stroke="#6b6f75" stroke-width="1"/><text x="298" y="592" font-size="12" font-family="Liberation Sans" fill="#3c3f44">y</text><text x="328" y="622" font-size="12" font-family="Liberation Sans" fill="#3c3f44">x</text>
</g>
<g clip-path="url(#c_front)"><rect x="260" y="659" width="427" height="452" fill="#9fa5ab"/><path d="M232.5 659 V1111 M253.5 659 V1111 M275.5 659 V1111 M317.5 659 V1111 M338.5 659 V1111 M359.5 659 V1111 M380.5 659 V1111 M422.5 659 V1111 M443.5 659 V1111 M464.5 659 V1111 M485.5 659 V1111 M527.5 659 V1111 M549.5 659 V1111 M570.5 659 V1111 M591.5 659 V1111 M633.5 659 V1111 M654.5 659 V1111 M675.5 659 V1111 M696.5 659 V1111 M260 618.5 H687 M260 639.5 H687 M260 661.5 H687 M260 682.5 H687 M260 724.5 H687 M260 745.5 H687 M260 766.5 H687 M260 787.5 H687 M260 829.5 H687 M260 850.5 H687 M260 871.5 H687 M260 892.5 H687 M260 935.5 H687 M260 956.5 H687 M260 977.5 H687 M260 998.5 H687 M260 1040.5 H687 M260 1061.5 H687 M260 1082.5 H687 M260 1103.5 H687 M260 1145.5 H687 " stroke="#959ba1" stroke-width="1" fill="none"/><path d="M296.5 659 V1111 M401.5 659 V1111 M506.5 659 V1111 M612.5 659 V1111 M717.5 659 V1111 M260 703.5 H687 M260 808.5 H687 M260 914.5 H687 M260 1019.5 H687 M260 1124.5 H687 " stroke="#868c92" stroke-width="1" fill="none"/>
<path d="M401.5 659 V913" stroke="#459a48" stroke-width="1.600"/><path d="M401 914 H687" stroke="#98464a" stroke-width="1.600"/>
<path d="M346.8 732.5 L414.2 732.5 M583.4 732.5 L655.0 732.5" stroke="#5be34a" stroke-width="1.500"/>
<path d="M441.6 815.1 C445.1 814.8 454.1 813.8 462.9 813.3 C471.7 812.9 483.8 812.6 494.2 812.5 C504.6 812.4 517.6 812.4 525.4 812.5 C533.2 812.6 537.8 813.0 541.0 813.3 C544.3 813.7 544.1 814.5 544.7 814.8 " fill="none" stroke="#5be34a" stroke-width="2.200"/>
<path d="M441.6 816.5 C445.1 816.2 454.1 815.2 462.9 814.8 C471.7 814.4 483.8 814.2 494.2 814.2 C504.6 814.1 517.6 814.3 525.4 814.6 C533.2 814.8 537.2 815.0 541.0 815.6 C544.9 816.2 547.1 817.8 548.3 818.2 " fill="none" stroke="#5be34a" stroke-width="1.300"/>
<path d="M442.1 814.8 C440.3 815.3 435.1 816.3 431.7 817.7 C428.2 819.1 423.5 820.9 421.2 823.1 C419.0 825.4 418.1 828.5 418.1 831.2 C418.1 834.0 419.9 837.6 421.2 839.6 C422.6 841.5 424.7 843.3 426.5 842.9 C428.2 842.6 429.9 840.3 431.7 837.5 C433.4 834.7 435.3 829.7 436.9 826.0 C438.4 822.4 440.3 817.5 441.0 815.8 " fill="none" stroke="#5be34a" stroke-width="1.400"/>
<path d="M544.2 814.6 C545.6 815.3 549.2 816.8 552.5 818.8 C555.8 820.7 561.7 823.4 564.0 826.0 C566.2 828.6 566.4 831.8 566.2 834.4 C566.1 837.0 564.2 840.5 563.1 841.7 C562.0 842.9 561.2 843.4 559.8 841.7 C558.4 839.9 556.1 834.7 554.6 831.2 C553.0 827.8 552.0 823.4 550.4 820.8 C548.9 818.2 546.1 816.5 545.2 815.6 " fill="none" stroke="#5be34a" stroke-width="1.400"/>
<path d="M400.9 883.3 C404.8 883.3 417.9 882.1 424.4 883.3 C430.9 884.5 434.6 888.3 440.0 890.6 C445.4 893.0 451.1 897.4 456.7 897.4 C462.2 897.4 466.7 893.8 473.3 890.6 C479.9 887.4 489.3 878.8 496.2 878.1 C503.2 877.4 508.9 883.2 515.0 886.5 C521.1 889.7 527.8 897.4 532.7 897.4 C537.6 897.4 538.1 888.3 544.2 886.5 C550.2 884.6 565.0 886.5 569.2 886.5 " fill="none" stroke="#1fb2f7" stroke-width="1.800"/>
<path d="M400.9 885.4 C404.8 885.7 417.9 885.6 424.4 887.0 C430.9 888.4 434.6 891.7 440.0 893.8 C445.4 896.0 451.1 899.8 456.7 899.8 C462.2 899.8 466.7 896.8 473.3 893.9 C479.9 891.1 489.3 883.4 496.2 882.8 C503.2 882.2 508.9 887.6 515.0 890.5 C521.1 893.3 527.8 899.8 532.7 899.8 C537.6 899.8 538.1 892.3 544.2 890.4 C550.2 888.5 565.0 888.7 569.2 888.4 " fill="none" stroke="#1fb2f7" stroke-width="1.300"/>
<path d="M400.9 887.5 C404.8 888.0 417.9 889.0 424.4 890.6 C430.9 892.2 434.6 895.1 440.0 897.0 C445.4 899.0 451.1 902.2 456.7 902.3 C462.2 902.3 466.7 899.7 473.3 897.2 C479.9 894.8 489.3 888.0 496.2 887.5 C503.2 887.0 508.9 892.0 515.0 894.4 C521.1 896.9 527.8 902.3 532.7 902.3 C537.6 902.2 538.1 896.3 544.2 894.3 C550.2 892.3 565.0 890.9 569.2 890.3 " fill="none" stroke="#1fb2f7" stroke-width="1.300"/>
<path d="M400.9 889.6 C404.8 890.4 417.9 892.5 424.4 894.3 C430.9 896.1 434.6 898.5 440.0 900.3 C445.4 902.0 451.1 904.6 456.7 904.7 C462.2 904.7 466.7 902.6 473.3 900.5 C479.9 898.4 489.3 892.5 496.2 892.2 C503.2 891.8 508.9 896.4 515.0 898.4 C521.1 900.5 527.8 904.7 532.7 904.7 C537.6 904.6 538.1 900.3 544.2 898.2 C550.2 896.1 565.0 893.2 569.2 892.2 " fill="none" stroke="#1fb2f7" stroke-width="1.300"/>
<path d="M400.9 891.7 C404.8 892.7 417.9 895.9 424.4 897.9 C430.9 899.9 434.6 901.9 440.0 903.5 C445.4 905.0 451.1 907.1 456.7 907.1 C462.2 907.2 466.7 905.5 473.3 903.8 C479.9 902.1 489.3 897.1 496.2 896.9 C503.2 896.6 508.9 900.7 515.0 902.4 C521.1 904.1 527.8 907.2 532.7 907.1 C537.6 907.1 538.1 904.3 544.2 902.1 C550.2 899.9 565.0 895.4 569.2 894.1 " fill="none" stroke="#1fb2f7" stroke-width="1.300"/>
<path d="M400.9 893.8 C404.8 895.1 417.9 899.4 424.4 901.6 C430.9 903.7 434.6 905.4 440.0 906.7 C445.4 908.0 451.1 909.5 456.7 909.5 C462.2 909.6 466.7 908.4 473.3 907.1 C479.9 905.8 489.3 901.7 496.2 901.6 C503.2 901.4 508.9 905.1 515.0 906.4 C521.1 907.8 527.8 909.6 532.7 909.5 C537.6 909.5 538.1 908.2 544.2 906.0 C550.2 903.7 565.0 897.7 569.2 896.0 " fill="none" stroke="#1fb2f7" stroke-width="1.300"/>
<path d="M400.9 895.8 C404.8 897.4 417.9 902.9 424.4 905.2 C430.9 907.6 434.6 908.8 440.0 909.9 C445.4 911.0 451.1 911.9 456.7 912.0 C462.2 912.1 466.7 911.4 473.3 910.4 C479.9 909.5 489.3 906.2 496.2 906.2 C503.2 906.2 508.9 909.5 515.0 910.4 C521.1 911.4 527.8 912.1 532.7 912.0 C537.6 911.9 538.1 912.2 544.2 909.9 C550.2 907.6 565.0 899.9 569.2 897.9 " fill="none" stroke="#1fb2f7" stroke-width="1.800"/>
<path d="M408.8 900.0 C411.4 901.0 419.2 904.0 424.4 905.7 C429.6 907.4 434.6 909.1 440.0 910.2 C445.4 911.3 451.1 912.2 456.7 912.3 C462.2 912.4 466.7 911.7 473.3 910.7 C479.9 909.8 489.3 906.6 496.2 906.6 C503.2 906.6 508.9 909.8 515.0 910.7 C521.1 911.7 527.8 912.4 532.7 912.3 C537.6 912.2 539.3 911.8 544.2 910.2 C549.0 908.6 558.9 903.9 561.9 902.6 " fill="none" stroke="#3fe58a" stroke-width="1.300"/>
<path d="M479.6 893.8 C481.0 893.1 485.1 891.0 487.9 890.1 C490.7 889.2 493.5 888.5 496.2 888.5 C499.0 888.6 502.0 889.7 504.6 890.6 C507.2 891.6 510.7 893.7 511.9 894.3 " fill="none" stroke="#3fe58a" stroke-width="1.100"/>
<path d="M400.9 883.3 L400.9 895.8 M569.2 886.5 L569.2 897.9 M424.4 883.3 L424.4 905.2 M544.2 886.5 L544.2 909.9 M400.9 883.3 L424.4 905.2 M400.9 895.8 L424.4 883.3 M544.2 886.5 L569.2 897.9 M544.2 909.9 L569.2 886.5 M496.2 878.1 L496.2 906.2 M456.7 897.4 L456.7 912.0 M532.7 897.4 L532.7 912.0 " stroke="#1fb2f7" stroke-width="1.300"/>
<path d="M296.5 1045 V1074.5 H325" fill="none" stroke="#6b6f75" stroke-width="1"/><text x="298" y="1046" font-size="12" font-family="Liberation Sans" fill="#3c3f44">z</text><text x="328" y="1076" font-size="12" font-family="Liberation Sans" fill="#3c3f44">x</text>
</g>
<g clip-path="url(#c_right)"><rect x="690" y="659" width="408" height="452" fill="#9fa5ab"/><path d="M649.5 659 V1111 M673.5 659 V1111 M698.5 659 V1111 M723.5 659 V1111 M773.5 659 V1111 M798.5 659 V1111 M823.5 659 V1111 M847.5 659 V1111 M897.5 659 V1111 M922.5 659 V1111 M947.5 659 V1111 M972.5 659 V1111 M1021.5 659 V1111 M1046.5 659 V1111 M1071.5 659 V1111 M1096.5 659 V1111 M1145.5 659 V1111 M690 630.5 H1098 M690 655.5 H1098 M690 705.5 H1098 M690 730.5 H1098 M690 755.5 H1098 M690 779.5 H1098 M690 829.5 H1098 M690 854.5 H1098 M690 879.5 H1098 M690 904.5 H1098 M690 953.5 H1098 M690 978.5 H1098 M690 1003.5 H1098 M690 1028.5 H1098 M690 1078.5 H1098 M690 1102.5 H1098 M690 1127.5 H1098 M690 1152.5 H1098 " stroke="#959ba1" stroke-width="1" fill="none"/><path d="M748.5 659 V1111 M872.5 659 V1111 M996.5 659 V1111 M1121.5 659 V1111 M690 680.5 H1098 M690 804.5 H1098 M690 928.5 H1098 M690 1053.5 H1098 " stroke="#868c92" stroke-width="1" fill="none"/>
<path d="M748.5 659 V928" stroke="#459a48" stroke-width="1.600"/><path d="M748 929 H1098" stroke="#98464a" stroke-width="1.600"/>
<path d="M733.4 715.2 L937.5 715.2" stroke="#5be34a" stroke-width="1.500"/>
<path d="M748.1 812.0 C755.1 813.7 776.2 818.4 790.2 822.5 C804.2 826.6 818.3 833.3 832.3 836.8 C846.3 840.3 862.5 843.7 874.4 843.6 C886.3 843.4 893.3 840.4 903.9 836.0 C914.4 831.6 928.3 821.5 937.5 817.0 C946.8 812.5 955.8 810.4 959.4 809.0 " fill="none" stroke="#5be34a" stroke-width="1.400"/>
<path d="M748.1 813.7 C755.1 815.8 776.2 822.2 790.2 826.7 C804.2 831.2 818.3 837.4 832.3 840.6 C846.3 843.8 861.1 845.7 874.4 845.7 C887.7 845.7 901.0 844.2 912.3 840.6 C923.5 837.0 933.9 829.3 941.7 824.2 C949.6 819.1 956.5 812.3 959.4 809.9 " fill="none" stroke="#5be34a" stroke-width="1.400"/>
<path d="M745.2 895.7 C745.8 895.3 738.0 891.2 749.0 893.2 C760.0 895.2 790.4 904.8 811.3 907.9 C832.2 911.1 853.4 912.9 874.4 912.2 C895.4 911.4 919.3 907.3 937.5 903.3 C955.8 899.3 976.1 890.7 983.8 888.2  L983.8 901.6 C976.1 904.4 955.8 914.3 937.5 918.5 C919.3 922.7 895.4 926.2 874.4 926.9 C853.4 927.6 832.8 925.5 811.3 922.7 C789.7 919.9 756.2 912.2 745.2 910.1  z" fill="#1fb2f7" stroke="#1fb2f7" stroke-width="1"/>
<path d="M745.2 899.2 C745.8 898.8 738.0 894.7 749.0 896.7 C760.0 898.7 790.4 908.3 811.3 911.4 C832.2 914.6 853.4 916.4 874.4 915.6 C895.4 914.9 919.3 910.8 937.5 906.8 C955.8 902.8 976.1 894.2 983.8 891.6 " fill="none" stroke="#0f94d8" stroke-width=".8"/>
<path d="M745.2 902.7 C745.8 902.3 738.0 898.1 749.0 900.2 C760.0 902.2 790.4 911.7 811.3 914.9 C832.2 918.0 853.4 919.9 874.4 919.1 C895.4 918.3 919.3 914.3 937.5 910.3 C955.8 906.3 976.1 897.6 983.8 895.1 " fill="none" stroke="#0f94d8" stroke-width=".8"/>
<path d="M745.2 906.2 C745.8 905.7 738.0 901.6 749.0 903.6 C760.0 905.7 790.4 915.2 811.3 918.4 C832.2 921.5 853.4 923.3 874.4 922.6 C895.4 921.8 919.3 917.7 937.5 913.7 C955.8 909.7 976.1 901.1 983.8 898.6 " fill="none" stroke="#0f94d8" stroke-width=".8"/>
<path d="M727.5 1045 V1074.5 H756" fill="none" stroke="#6b6f75" stroke-width="1"/><text x="729" y="1046" font-size="12" font-family="Liberation Sans" fill="#3c3f44">z</text><text x="759" y="1076" font-size="12" font-family="Liberation Sans" fill="#3c3f44">y</text>
</g>
<g clip-path="url(#c_persp)"><rect x="690" y="201" width="408" height="455" fill="#9fa5ab"/>
<rect x="690" y="488" width="408" height="169" fill="#a2a8ae"/>
<path d="M690 650.1 H1098 M690 634.7 H1098 M690 621.4 H1098 M690 609.8 H1098 M690 590.7 H1098 M690 582.7 H1098 M690 575.5 H1098 M690 569.1 H1098 M690 557.9 H1098 M690 553.0 H1098 M690 548.5 H1098 M690 544.4 H1098 M690 537.0 H1098 M690 533.8 H1098 M690 530.7 H1098 M690 527.9 H1098 M404.5 488.6 L-1592.0 662 M412.5 488.6 L-1552.7 662 M420.6 488.6 L-1513.5 662 M428.6 488.6 L-1474.2 662 M444.6 488.6 L-1395.7 662 M452.7 488.6 L-1356.4 662 M460.7 488.6 L-1317.2 662 M468.7 488.6 L-1277.9 662 M484.8 488.6 L-1199.4 662 M492.8 488.6 L-1160.1 662 M500.9 488.6 L-1120.9 662 M508.9 488.6 L-1081.6 662 M525.0 488.6 L-1003.1 662 M533.0 488.6 L-963.8 662 M541.0 488.6 L-924.6 662 M549.1 488.6 L-885.3 662 M565.1 488.6 L-806.8 662 M573.2 488.6 L-767.5 662 M581.2 488.6 L-728.3 662 M589.2 488.6 L-689.0 662 M605.3 488.6 L-610.5 662 M613.3 488.6 L-571.2 662 M621.4 488.6 L-532.0 662 M629.4 488.6 L-492.7 662 M645.5 488.6 L-414.2 662 M653.5 488.6 L-374.9 662 M661.5 488.6 L-335.7 662 M669.6 488.6 L-296.4 662 M685.6 488.6 L-217.9 662 M693.6 488.6 L-178.6 662 M701.7 488.6 L-139.4 662 M709.7 488.6 L-100.1 662 M725.8 488.6 L-21.6 662 M733.8 488.6 L17.7 662 M741.8 488.6 L57.0 662 M749.9 488.6 L96.2 662 M765.9 488.6 L174.7 662 M774.0 488.6 L214.0 662 M782.0 488.6 L253.3 662 M790.0 488.6 L292.5 662 M806.1 488.6 L371.0 662 M814.1 488.6 L410.3 662 M822.2 488.6 L449.6 662 M830.2 488.6 L488.8 662 M846.3 488.6 L567.3 662 M854.3 488.6 L606.6 662 M862.3 488.6 L645.9 662 M870.4 488.6 L685.1 662 M886.4 488.6 L763.6 662 M894.5 488.6 L802.9 662 M902.5 488.6 L842.2 662 M910.5 488.6 L881.4 662 M926.6 488.6 L959.9 662 M934.6 488.6 L999.2 662 M942.6 488.6 L1038.5 662 M950.7 488.6 L1077.7 662 M966.7 488.6 L1156.3 662 M974.8 488.6 L1195.5 662 M982.8 488.6 L1234.8 662 M990.8 488.6 L1274.0 662 M1006.9 488.6 L1352.6 662 M1014.9 488.6 L1391.8 662 M1023.0 488.6 L1431.1 662 M1031.0 488.6 L1470.3 662 M1047.1 488.6 L1548.9 662 M1055.1 488.6 L1588.1 662 M1063.1 488.6 L1627.4 662 M1071.2 488.6 L1666.6 662 M1087.2 488.6 L1745.2 662 M1095.3 488.6 L1784.4 662 M1103.3 488.6 L1823.7 662 M1111.3 488.6 L1862.9 662 M1127.4 488.6 L1941.5 662 M1135.4 488.6 L1980.7 662 M1143.5 488.6 L2020.0 662 M1151.5 488.6 L2059.2 662 M1167.5 488.6 L2137.8 662 M1175.6 488.6 L2177.0 662 M1183.6 488.6 L2216.3 662 M1191.6 488.6 L2255.5 662 M1207.7 488.6 L2334.1 662 M1215.7 488.6 L2373.3 662 M1223.8 488.6 L2412.6 662 M1231.8 488.6 L2451.9 662 M1247.9 488.6 L2530.4 662 M1255.9 488.6 L2569.6 662 M1263.9 488.6 L2608.9 662 M1272.0 488.6 L2648.2 662 M1288.0 488.6 L2726.7 662 M1296.1 488.6 L2765.9 662 M1304.1 488.6 L2805.2 662 M1312.1 488.6 L2844.5 662 M1328.2 488.6 L2923.0 662 M1336.2 488.6 L2962.2 662 M1344.3 488.6 L3001.5 662 M1352.3 488.6 L3040.8 662 " stroke="#8d9198" stroke-width=".9" fill="none" opacity=".6"/><path d="M690 520.3 H1098 M690 516.0 H1098 M690 512.1 H1098 M690 508.7 H1098 M690 505.5 H1098 M690 502.7 H1098 M690 500.1 H1098 M690 497.7 H1098 M690 495.6 H1098 M690 493.6 H1098 M690 491.7 H1098 M690 490.0 H1098 M690 488.6 H1098 " stroke="#7d8288" stroke-width=".9" fill="none" opacity=".9"/><path d="M690 599.7 H1098 M690 563.2 H1098 M690 540.6 H1098 M690 525.2 H1098 M396.5 488.6 L-1631.3 662 M436.6 488.6 L-1435.0 662 M476.8 488.6 L-1238.7 662 M516.9 488.6 L-1042.3 662 M557.1 488.6 L-846.0 662 M597.3 488.6 L-649.7 662 M637.4 488.6 L-453.4 662 M677.6 488.6 L-257.1 662 M717.7 488.6 L-60.8 662 M757.9 488.6 L135.5 662 M798.1 488.6 L331.8 662 M838.2 488.6 L528.1 662 M878.4 488.6 L724.4 662 M918.5 488.6 L920.7 662 M958.7 488.6 L1117.0 662 M998.9 488.6 L1313.3 662 M1039.0 488.6 L1509.6 662 M1079.2 488.6 L1705.9 662 M1119.4 488.6 L1902.2 662 M1159.5 488.6 L2098.5 662 M1199.7 488.6 L2294.8 662 M1239.8 488.6 L2491.1 662 M1280.0 488.6 L2687.4 662 M1320.2 488.6 L2883.7 662 M1360.3 488.6 L3080.0 662 " stroke="#74787e" stroke-width="1" fill="none"/>
<path d="M812.6 562.700 L727 659" stroke="#98464a" stroke-width="1.800"/><path d="M1003 562.700 H1098" stroke="#459a48" stroke-width="1.600"/>
<path d="M760.2 357.2 C760.9 356.1 762.2 355.0 769.2 354.4 C776.3 353.8 783.9 353.4 802.5 353.6 C821.1 353.9 852.1 355.2 880.8 356.0 C909.6 356.8 957.7 357.5 974.9 358.3 C992.0 359.2 983.5 360.2 983.9 361.1 C984.2 361.9 987.5 362.9 976.8 363.4 C966.2 364.0 939.3 364.1 920.0 364.2 C900.8 364.3 884.1 364.4 861.3 364.2 C838.4 364.0 798.9 363.6 782.9 363.0 C766.9 362.5 769.1 362.1 765.3 361.1 C761.5 360.1 759.6 358.3 760.2 357.2 z" fill="none" stroke="#5be34a" stroke-width="1.500"/>
<path d="M804.5 382.6 C804.5 381.8 801.5 381.1 814.3 380.7 C827.0 380.2 855.4 380.1 880.8 379.9 C906.3 379.7 951.5 379.3 967.0 379.5 C982.5 379.7 973.7 380.5 973.7 381.1 C973.7 381.6 982.5 382.3 967.0 383.0 C951.5 383.7 906.3 384.9 880.8 385.4 C855.4 385.8 827.0 386.2 814.3 385.8 C801.5 385.3 804.5 383.5 804.5 382.6 z" fill="none" stroke="#5be34a" stroke-width="1.500"/>
<path d="M798.6 466.1 C799.2 464.2 805.1 461.7 814.3 462.9 C823.4 464.1 840.4 469.1 853.4 473.1 C866.5 477.1 881.5 483.7 892.6 486.8 C903.7 489.9 911.5 491.9 920.0 491.9 C928.5 491.9 934.4 490.6 943.5 486.8 C952.7 483.0 965.7 473.3 974.9 469.2 C984.0 465.1 993.3 463.1 998.4 462.1 C1003.4 461.2 1006.1 461.7 1005.4 463.7 C1004.8 465.7 1000.8 469.4 994.4 473.9 C988.0 478.4 976.2 486.4 967.0 490.7 C957.9 495.0 948.1 498.0 939.6 499.7 C931.1 501.5 925.9 502.2 916.1 501.3 C906.3 500.5 893.3 497.7 880.8 494.6 C868.4 491.6 853.4 486.4 841.7 482.9 C829.9 479.4 817.5 476.7 810.3 473.9 C803.2 471.1 797.9 467.9 798.6 466.1 z" fill="none" stroke="#5be34a" stroke-width="1.500"/>
<path d="M811.4 532.7 C812.2 532.4 811.6 530.4 816.1 531.4 C820.6 532.3 827.4 535.2 838.2 538.2 C849.1 541.3 866.8 547.1 881.1 549.8 C895.4 552.5 909.7 554.1 924.1 554.3 C938.4 554.5 954.5 552.8 967.0 551.1 C979.5 549.4 989.1 546.4 999.2 544.0 C1009.2 541.7 1022.8 538.3 1027.5 537.2  L1027.5 544.7 C1022.8 546.1 1009.2 550.6 999.2 553.3 C989.1 555.9 979.5 558.8 967.0 560.6 C954.5 562.3 938.4 563.7 924.1 563.8 C909.7 563.9 895.4 563.2 881.1 561.2 C866.8 559.2 849.8 554.2 838.2 551.5 C826.6 548.9 815.9 546.5 811.4 545.5  z" fill="#1b93cd" stroke="#27c4ff" stroke-width="1"/>
<path d="M811.4 532.7 C812.2 532.4 811.6 530.4 816.1 531.4 C820.6 532.3 827.4 535.2 838.2 538.2 C849.1 541.3 866.8 547.1 881.1 549.8 C895.4 552.5 909.7 554.1 924.1 554.3 C938.4 554.5 954.5 552.8 967.0 551.1 C979.5 549.4 989.1 546.4 999.2 544.0 C1009.2 541.7 1022.8 538.3 1027.5 537.2  L1027.5 541.9 C1022.8 543.0 1009.2 546.4 999.2 548.8 C989.1 551.1 979.5 554.1 967.0 555.8 C954.5 557.6 938.4 559.3 924.1 559.1 C909.7 558.8 895.4 557.2 881.1 554.5 C866.8 551.9 849.1 546.0 838.2 543.0 C827.4 539.9 820.6 537.0 816.1 536.1 C811.6 535.2 812.2 537.2 811.4 537.4  z" fill="#22baf9" stroke="none" stroke-width="1"/>
<path d="M811.4 541.2 C812.2 541.0 811.6 539.0 816.1 540.0 C820.6 540.9 827.4 543.7 838.2 546.8 C849.1 549.9 866.8 555.7 881.1 558.4 C895.4 561.1 916.9 562.2 924.1 562.9 " fill="none" stroke="#27c4ff" stroke-width="1"/>
<path d="M930.5 556.1 C934.1 555.2 955.5 554.5 967.0 552.8 C978.4 551.1 990.9 547.6 999.2 545.8 C1007.4 543.9 1014.9 541.5 1016.3 541.5 C1017.8 541.5 1014.2 543.6 1007.7 545.8 C1001.3 547.9 988.1 552.3 977.7 554.3 C967.3 556.4 953.4 557.9 945.5 558.2 C937.6 558.5 926.9 556.9 930.5 556.1 z" fill="#0c3f5c"/>
<path d="M785.6 555.2 C786.9 554.7 784.4 551.0 793.2 552.2 C801.9 553.4 823.6 559.6 838.2 562.3 C852.9 565.0 866.8 567.4 881.1 568.3 C895.4 569.2 912.8 568.3 924.1 567.6 C935.3 567.0 938.0 566.5 948.7 564.4 C959.5 562.4 975.3 559.2 988.4 555.4 C1001.6 551.7 1021.0 544.1 1027.5 541.9  L1027.5 552.0 C1021.0 554.0 1001.6 560.6 988.4 564.4 C975.3 568.3 959.5 572.6 948.7 575.2 C938.0 577.7 933.5 578.1 924.1 579.4 C914.6 580.8 902.6 582.6 891.9 583.1 C881.1 583.6 872.2 583.6 859.7 582.7 C847.2 581.7 829.1 579.4 816.8 577.3 C804.4 575.2 790.8 571.4 785.6 570.2  z" fill="#1b93cd" stroke="#27c4ff" stroke-width="1"/>
<path d="M785.6 555.2 C786.9 554.7 784.4 551.0 793.2 552.2 C801.9 553.4 823.6 559.6 838.2 562.3 C852.9 565.0 866.8 567.4 881.1 568.3 C895.4 569.2 912.8 568.3 924.1 567.6 C935.3 567.0 938.0 566.5 948.7 564.4 C959.5 562.4 975.3 559.2 988.4 555.4 C1001.6 551.7 1021.0 544.1 1027.5 541.9  L1027.5 544.9 C1021.0 547.1 1001.6 554.4 988.4 558.4 C975.3 562.4 959.5 566.5 948.7 568.7 C938.0 571.0 935.3 571.3 924.1 571.9 C912.8 572.6 895.4 573.5 881.1 572.6 C866.8 571.7 852.9 569.2 838.2 566.6 C823.6 563.9 801.9 557.7 793.2 556.5 C784.4 555.3 786.9 559.0 785.6 559.5  z" fill="#22baf9" stroke="none" stroke-width="1"/>
<path d="M785.6 563.3 C786.9 562.8 784.4 559.2 793.2 560.3 C801.9 561.5 823.6 567.7 838.2 570.4 C852.9 573.1 866.8 575.5 881.1 576.4 C895.4 577.3 912.8 576.4 924.1 575.8 C935.3 575.2 938.0 575.2 948.7 572.6 C959.5 570.0 975.3 564.6 988.4 560.3 C1001.6 556.0 1021.0 549.0 1027.5 546.8 " fill="none" stroke="#27c4ff" stroke-width=".9"/>
<path d="M785.6 566.4 C786.9 565.9 784.4 562.2 793.2 563.3 C801.9 564.5 823.6 570.8 838.2 573.4 C852.9 576.1 866.8 578.5 881.1 579.4 C895.4 580.3 912.8 579.4 924.1 578.8 C935.3 578.2 938.0 578.4 948.7 575.6 C959.5 572.8 975.3 566.6 988.4 562.1 C1001.6 557.6 1021.0 550.8 1027.5 548.6 " fill="none" stroke="#27c4ff" stroke-width=".9"/>
<path d="M948.7 564.4 L948.7 575.2" stroke="#5cd4ff" stroke-width="1"/>
<path d="M816.8 577.3 C823.9 578.2 847.2 581.7 859.7 582.7 C872.2 583.6 881.1 583.6 891.9 583.1 C902.6 582.6 914.6 580.8 924.1 579.4 C933.5 578.1 938.0 577.7 948.7 575.2 C959.5 572.6 975.3 568.3 988.4 564.4 C1001.6 560.6 1021.0 554.0 1027.5 552.0 " fill="none" stroke="#3fe58a" stroke-width="1.300"/>
<path d="M727.500 591 V620.500 H756" fill="none" stroke="#6b6f75"/><text x="729" y="592" font-size="12" font-family="Liberation Sans" fill="#3c3f44">z</text><text x="727" y="622" font-size="12" font-family="Liberation Sans" fill="#3c3f44">x</text><text x="758" y="623" font-size="12" font-family="Liberation Sans" fill="#3c3f44">y</text>
</g>
<rect x="259.5" y="200.5" width="428" height="456" fill="none" stroke="#9ca1ab"/>
<rect x="689.5" y="200.5" width="409" height="456" fill="none" stroke="#9ca1ab"/>
<rect x="259.5" y="658.5" width="428" height="453" fill="none" stroke="#9ca1ab"/>
<rect x="689.5" y="658.5" width="409" height="453" fill="none" stroke="#9ca1ab"/>
<rect x="261" y="201" width="47" height="17" fill="#d9dce3"/><path d="M295.5 203 v13" stroke="#333"/><path d="M298 208 h7 l-3.500 4z" fill="#222"/>
<rect x="691" y="201" width="89" height="17" fill="#d9dce3"/><path d="M767.5 203 v13" stroke="#333"/><path d="M770 208 h7 l-3.500 4z" fill="#222"/>
<rect x="261" y="660" width="56" height="17" fill="#8fa6cc"/><path d="M304.5 662 v13" stroke="#333"/><path d="M307 667 h7 l-3.500 4z" fill="#222"/>
<rect x="691" y="660" width="56" height="17" fill="#d9dce3"/><path d="M734.5 662 v13" stroke="#333"/><path d="M737 667 h7 l-3.500 4z" fill="#222"/>
</svg>
<span class="t" style="left:267.0px;top:202.6px;font-size:12px;letter-spacing:0.551px;color:#4a4d55;">Top</span>
<span class="t" style="left:698.0px;top:202.6px;font-size:12px;letter-spacing:-0.063px;color:#4a4d55;">Perspective</span>
<span class="t" style="left:267.0px;top:661.1px;font-size:12px;letter-spacing:0.199px;color:#111;">Front</span>
<span class="t" style="left:698.0px;top:661.1px;font-size:12px;letter-spacing:0.198px;color:#4a4d55;">Right</span>
<div class="a" style="left:1100px;top:199px;width:199px;height:932px;background:#e6e8ee"></div>
<div class="a" style="left:1107px;top:203px;width:191px;height:2px;border-top:1px solid #b9bdc9;border-bottom:1px solid #b9bdc9"></div>
<div class="a" style="left:1106px;top:229px;width:193px;height:902px;background:#f3f4f8;border-left:1px solid #b4b9c6;border-top:1px solid #b4b9c6"></div>
<svg style="left:1100px;top:200px" width="200" height="40" viewBox="1100 200 200 40">
<defs><linearGradient id="mon" x1="0" y1="0" x2="0" y2="1"><stop offset="0" stop-color="#999"/><stop offset="1" stop-color="#f0f0f0"/></linearGradient></defs>
<path d="M1234.5 229.5 V212 Q1234.5 208.500 1237.5 208.500 H1266 L1286 229.5 z" fill="#d9dde8" stroke="#b4b9c6"/>
<path d="M1191.5 229.5 V212 Q1191.5 208.500 1194.5 208.500 H1223 L1243 229.5 z" fill="#d9dde8" stroke="#b4b9c6"/>
<path d="M1149.5 229.5 V212 Q1149.5 208.500 1152.5 208.500 H1181 L1201 229.5 z" fill="#d9dde8" stroke="#b4b9c6"/>
<path d="M1106.5 230.5 V212 Q1106.5 208.500 1109.5 208.500 H1140 L1160 230.5 z" fill="#f3f4f8" stroke="#b4b9c6"/>
<path d="M1107 230.500 H1158" stroke="#f3f4f8" stroke-width="2"/>
<path d="M1118.50 212.70 A5.8 5.8 0 0 1 1122.80 214.61" fill="none" stroke="#e02020" stroke-width="2.800"/>
<path d="M1122.60 214.40 A5.8 5.8 0 0 1 1124.29 218.79" fill="none" stroke="#f08a10" stroke-width="2.800"/>
<path d="M1124.30 218.50 A5.8 5.8 0 0 1 1122.39 222.80" fill="none" stroke="#e8d810" stroke-width="2.800"/>
<path d="M1122.60 222.60 A5.8 5.8 0 0 1 1118.21 224.29" fill="none" stroke="#38b030" stroke-width="2.800"/>
<path d="M1118.50 224.30 A5.8 5.8 0 0 1 1114.20 222.39" fill="none" stroke="#20a8c8" stroke-width="2.800"/>
<path d="M1114.40 222.60 A5.8 5.8 0 0 1 1112.71 218.21" fill="none" stroke="#2848d0" stroke-width="2.800"/>
<path d="M1112.70 218.50 A5.8 5.8 0 0 1 1114.61 214.20" fill="none" stroke="#9030c0" stroke-width="2.800"/>
<path d="M1114.40 214.40 A5.8 5.8 0 0 1 1118.79 212.71" fill="none" stroke="#d020a0" stroke-width="2.800"/>
<path d="M1153 211.500 l14 3 -1 7 -8 5 -6 -5z" fill="#e8501a" stroke="#7a2408" stroke-width=".8"/><path d="M1153 219.500 l5 4 8 -4 v2.500 l-8 5 -5 -5z" fill="#2a3a9a"/><path d="M1153 218 l5 4 8 -3.500" stroke="#fff" stroke-width="1.100" fill="none"/>
<rect x="1196.500" y="212.500" width="13" height="10" fill="url(#mon)" stroke="#111" stroke-width="1.600"/><path d="M1200 223.500 h6 v2 h3 v1.500 h-12 v-1.500 h3z" fill="#111"/>
<rect x="1239.500" y="212.500" width="14" height="14" fill="#3450c8" stroke="#8a90a8" stroke-width="1"/><rect x="1240" y="213" width="13" height="3" fill="#e4e6f0"/><circle cx="1246.500" cy="221" r="4.500" fill="#3450c8" stroke="#dfe4ff" stroke-width="1"/><text x="1244" y="225" font-size="8" font-weight="bold" fill="#fff" font-family="Liberation Sans">?</text>
<g transform="translate(1290,220)" fill="none" stroke="#8a8f99" stroke-width="1"><path d="M7.39 -1.27 L7.39 1.27 L5.33 1.36 L4.73 2.81 L6.12 4.33 L4.33 6.12 L2.81 4.73 L1.36 5.33 L1.27 7.39 L-1.27 7.39 L-1.36 5.33 L-2.81 4.73 L-4.33 6.12 L-6.12 4.33 L-4.73 2.81 L-5.33 1.36 L-7.39 1.27 L-7.39 -1.27 L-5.33 -1.36 L-4.73 -2.81 L-6.12 -4.33 L-4.33 -6.12 L-2.81 -4.73 L-1.36 -5.33 L-1.27 -7.39 L1.27 -7.39 L1.36 -5.33 L2.81 -4.73 L4.33 -6.12 L6.12 -4.33 L4.73 -2.81 L5.33 -1.36 z"/><circle r="2.31"/></g>
</svg>
<span class="t" style="left:1128.5px;top:212.1px;font-size:12px;color:#111;">P...</span>
<span class="t" style="left:1170.5px;top:212.1px;font-size:12px;color:#111;">L...</span>
<span class="t" style="left:1213.0px;top:212.1px;font-size:12px;letter-spacing:-0.867px;color:#111;">Di...</span>
<span class="t" style="left:1256.0px;top:212.1px;font-size:12px;color:#111;">H...</span>
<div class="a" style="left:1110px;top:237px;width:182px;height:416px;background:#fff;border:1px solid #dcdfe6"></div>
<div class="a" style="left:1111px;top:237px;width:180px;height:22px;background:#f6f7fa;border-bottom:1px solid #e1e3e9"></div>
<span class="t" style="left:1114.0px;top:241.6px;font-size:11.5px;color:#111;letter-spacing:-0.42px;">Viewport</span>
<div class="a" style="left:1111px;top:259px;width:180px;height:19px;border-bottom:1px solid #e4e6ec"></div>
<div class="a" style="left:1111px;top:259px;width:6px;height:18px;background:#f3f4f7"></div>
<span class="t" style="left:1123.0px;top:262.1px;font-size:11.5px;color:#111;letter-spacing:-0.42px;">Title</span>
<span class="t" style="left:1205.0px;top:262.1px;font-size:11.5px;color:#111;letter-spacing:-0.42px;">Front</span>
<div class="a" style="left:1111px;top:278px;width:180px;height:19px;border-bottom:1px solid #e4e6ec"></div>
<div class="a" style="left:1111px;top:278px;width:6px;height:18px;background:#f3f4f7"></div>
<span class="t" style="left:1123.0px;top:281.1px;font-size:11.5px;color:#111;letter-spacing:-0.42px;">Width</span>
<span class="t" style="left:1205.0px;top:281.1px;font-size:11.5px;color:#111;letter-spacing:-0.42px;">427</span>
<div class="a" style="left:1111px;top:297px;width:180px;height:19px;border-bottom:1px solid #e4e6ec"></div>
<div class="a" style="left:1111px;top:297px;width:6px;height:18px;background:#f3f4f7"></div>
<span class="t" style="left:1123.0px;top:300.1px;font-size:11.5px;color:#111;letter-spacing:-0.42px;">Height</span>
<span class="t" style="left:1205.0px;top:300.1px;font-size:11.5px;color:#111;letter-spacing:-0.42px;">450</span>
<div class="a" style="left:1111px;top:316px;width:180px;height:20px;border-bottom:1px solid #e4e6ec"></div>
<div class="a" style="left:1111px;top:316px;width:6px;height:19px;background:#f3f4f7"></div>
<span class="t" style="left:1123.0px;top:319.6px;font-size:11.5px;color:#111;letter-spacing:-0.42px;">Projection</span>
<span class="t" style="left:1205.0px;top:319.6px;font-size:11.5px;color:#111;letter-spacing:-0.42px;">Parallel</span>
<div class="a" style="left:1111px;top:336px;width:180px;height:22px;background:#f6f7fa;border-bottom:1px solid #e1e3e9"></div>
<span class="t" style="left:1114.0px;top:340.6px;font-size:11.5px;color:#111;letter-spacing:-0.42px;">Camera</span>
<div class="a" style="left:1111px;top:358px;width:180px;height:20px;border-bottom:1px solid #e4e6ec"></div>
<div class="a" style="left:1111px;top:358px;width:6px;height:19px;background:#f3f4f7"></div>
<div class="a" style="left:1202px;top:358px;width:89px;height:19px;background:#e4e6ec"></div>
<span class="t" style="left:1123.0px;top:361.6px;font-size:11.5px;color:#888;letter-spacing:-0.42px;">Lens Length</span>
<span class="t" style="left:1205.0px;top:361.6px;font-size:11.5px;color:#888;letter-spacing:-0.42px;">50.0</span>
<div class="a" style="left:1111px;top:378px;width:180px;height:19px;border-bottom:1px solid #e4e6ec"></div>
<div class="a" style="left:1111px;top:378px;width:6px;height:18px;background:#f3f4f7"></div>
<span class="t" style="left:1123.0px;top:381.1px;font-size:11.5px;color:#111;letter-spacing:-0.42px;">Rotation</span>
<span class="t" style="left:1205.0px;top:381.1px;font-size:11.5px;color:#111;letter-spacing:-0.42px;">0.0</span>
<div class="a" style="left:1111px;top:397px;width:180px;height:19px;border-bottom:1px solid #e4e6ec"></div>
<div class="a" style="left:1111px;top:397px;width:6px;height:18px;background:#f3f4f7"></div>
<span class="t" style="left:1123.0px;top:400.1px;font-size:11.5px;color:#111;letter-spacing:-0.42px;">X Location</span>
<span class="t" style="left:1205.0px;top:400.1px;font-size:11.5px;color:#111;letter-spacing:-0.42px;">3.431</span>
<div class="a" style="left:1111px;top:416px;width:180px;height:19px;border-bottom:1px solid #e4e6ec"></div>
<div class="a" style="left:1111px;top:416px;width:6px;height:18px;background:#f3f4f7"></div>
<span class="t" style="left:1123.0px;top:419.1px;font-size:11.5px;color:#111;letter-spacing:-0.42px;">Y Location</span>
<span class="t" style="left:1205.0px;top:419.1px;font-size:11.5px;color:#111;letter-spacing:-0.42px;">-80.212</span>
<div class="a" style="left:1111px;top:435px;width:180px;height:19px;border-bottom:1px solid #e4e6ec"></div>
<div class="a" style="left:1111px;top:435px;width:6px;height:18px;background:#f3f4f7"></div>
<span class="t" style="left:1123.0px;top:438.1px;font-size:11.5px;color:#111;letter-spacing:-0.42px;">Z Location</span>
<span class="t" style="left:1205.0px;top:438.1px;font-size:11.5px;color:#111;letter-spacing:-0.42px;">1.374</span>
<div class="a" style="left:1111px;top:454px;width:180px;height:20px;border-bottom:1px solid #e4e6ec"></div>
<div class="a" style="left:1111px;top:454px;width:6px;height:19px;background:#f3f4f7"></div>
<span class="t" style="left:1123.0px;top:457.6px;font-size:11.5px;color:#111;letter-spacing:-0.42px;">Location</span>
<div class="a" style="left:1203px;top:456px;width:88px;height:16px;border:1px solid #707070;border-radius:3px;background:linear-gradient(180deg,#f2f2f2 0,#ebebeb 50%,#dddddd 51%,#cfcfcf 100%);box-shadow:0 0 0 1px #fcfcfc inset"></div>
<span class="t" style="left:1230.0px;top:457.6px;font-size:11.5px;color:#111;letter-spacing:-0.3px;">Place...</span>
<div class="a" style="left:1111px;top:474px;width:180px;height:22px;background:#f6f7fa;border-bottom:1px solid #e1e3e9"></div>
<span class="t" style="left:1114.0px;top:478.6px;font-size:11.5px;color:#111;letter-spacing:-0.42px;">Target</span>
<div class="a" style="left:1111px;top:496px;width:180px;height:19px;border-bottom:1px solid #e4e6ec"></div>
<div class="a" style="left:1111px;top:496px;width:6px;height:18px;background:#f3f4f7"></div>
<span class="t" style="left:1123.0px;top:499.1px;font-size:11.5px;color:#111;letter-spacing:-0.42px;">X Target</span>
<span class="t" style="left:1205.0px;top:499.1px;font-size:11.5px;color:#111;letter-spacing:-0.42px;">3.431</span>
<div class="a" style="left:1111px;top:515px;width:180px;height:19px;border-bottom:1px solid #e4e6ec"></div>
<div class="a" style="left:1111px;top:515px;width:6px;height:18px;background:#f3f4f7"></div>
<span class="t" style="left:1123.0px;top:518.1px;font-size:11.5px;color:#111;letter-spacing:-0.42px;">Y Target</span>
<span class="t" style="left:1205.0px;top:518.1px;font-size:11.5px;color:#111;letter-spacing:-0.42px;">4.455</span>
<div class="a" style="left:1111px;top:534px;width:180px;height:19px;border-bottom:1px solid #e4e6ec"></div>
<div class="a" style="left:1111px;top:534px;width:6px;height:18px;background:#f3f4f7"></div>
<span class="t" style="left:1123.0px;top:537.1px;font-size:11.5px;color:#111;letter-spacing:-0.42px;">Z Target</span>
<span class="t" style="left:1205.0px;top:537.1px;font-size:11.5px;color:#111;letter-spacing:-0.42px;">1.374</span>
<div class="a" style="left:1111px;top:553px;width:180px;height:20px;border-bottom:1px solid #e4e6ec"></div>
<div class="a" style="left:1111px;top:553px;width:6px;height:19px;background:#f3f4f7"></div>
<span class="t" style="left:1123.0px;top:556.6px;font-size:11.5px;color:#111;letter-spacing:-0.42px;">Location</span>
<div class="a" style="left:1203px;top:555px;width:88px;height:16px;border:1px solid #707070;border-radius:3px;background:linear-gradient(180deg,#f2f2f2 0,#ebebeb 50%,#dddddd 51%,#cfcfcf 100%);box-shadow:0 0 0 1px #fcfcfc inset"></div>
<span class="t" style="left:1230.0px;top:556.6px;font-size:11.5px;color:#111;letter-spacing:-0.3px;">Place...</span>
<div class="a" style="left:1111px;top:573px;width:180px;height:22px;background:#f6f7fa;border-bottom:1px solid #e1e3e9"></div>
<span class="t" style="left:1114.0px;top:577.6px;font-size:11.5px;color:#111;letter-spacing:-0.42px;">Wallpaper</span>
<div class="a" style="left:1111px;top:595px;width:180px;height:19px;border-bottom:1px solid #e4e6ec"></div>
<div class="a" style="left:1111px;top:595px;width:6px;height:18px;background:#f3f4f7"></div>
<span class="t" style="left:1123.0px;top:598.1px;font-size:11.5px;color:#111;letter-spacing:-0.42px;">Filename</span>
<span class="t" style="left:1203.5px;top:598.1px;font-size:11.5px;color:#111;letter-spacing:-0.42px;">(none)</span>
<div class="a" style="left:1111px;top:614px;width:180px;height:19px;border-bottom:1px solid #e4e6ec"></div>
<div class="a" style="left:1111px;top:614px;width:6px;height:18px;background:#f3f4f7"></div>
<span class="t" style="left:1123.0px;top:617.1px;font-size:11.5px;color:#111;letter-spacing:-0.42px;">Show</span>
<div class="a" style="left:1206px;top:617px;width:13px;height:13px;border:1px solid #8e8f8f;background:linear-gradient(135deg,#dcdfe4,#fdfdfd)"></div>
<svg style="left:1206px;top:617px" width="13" height="13"><path d="M3 6.500 l2.500 3 L10 3" fill="none" stroke="#31347c" stroke-width="1.800"/></svg>
<div class="a" style="left:1111px;top:633px;width:180px;height:19px;border-bottom:1px solid #e4e6ec"></div>
<div class="a" style="left:1111px;top:633px;width:6px;height:18px;background:#f3f4f7"></div>
<span class="t" style="left:1123.0px;top:636.1px;font-size:11.5px;color:#111;letter-spacing:-0.42px;">Gray</span>
<div class="a" style="left:1206px;top:636px;width:13px;height:13px;border:1px solid #8e8f8f;background:linear-gradient(135deg,#dcdfe4,#fdfdfd)"></div>
<svg style="left:1206px;top:636px" width="13" height="13"><path d="M3 6.500 l2.500 3 L10 3" fill="none" stroke="#31347c" stroke-width="1.800"/></svg>
<div class="a" style="left:1201px;top:259px;width:1px;height:77px;background:#e4e6ec"></div>
<div class="a" style="left:1201px;top:358px;width:1px;height:116px;background:#e4e6ec"></div>
<div class="a" style="left:1201px;top:496px;width:1px;height:77px;background:#e4e6ec"></div>
<div class="a" style="left:1201px;top:595px;width:1px;height:57px;background:#e4e6ec"></div>
<div class="a" style="left:1273px;top:318px;width:17px;height:16px;border:1px solid #8a8c92;background:linear-gradient(180deg,#f4f4f4,#dcdcdc)"></div><svg style="left:1273px;top:318px" width="17" height="16"><path d="M5 6.500 h7 l-3.500 4z" fill="#000"/></svg>
<div class="a" style="left:1274px;top:596px;width:17px;height:17px;border:1px solid #707070;border-radius:3px;background:linear-gradient(180deg,#f2f2f2 0,#ebebeb 50%,#dddddd 51%,#cfcfcf 100%)"></div>
<span class="t" style="left:1278.0px;top:597.2px;font-size:11px;color:#111;">...</span>
<svg style="left:0;top:1105px" width="1310" height="60" viewBox="0 1105 1310 60">
<path d="M467 1112.500 L472 1128 Q473 1130.500 476 1130.500 H491 Q494 1130.500 494 1127.500 V1112.500" fill="#dfe2ee" stroke="#a9afc2"/>
<path d="M422.5 1112.500 L427.5 1128 Q428.5 1130.500 431.5 1130.500 H465 Q468 1130.500 468 1127.500 V1112.500" fill="#dfe2ee" stroke="#a9afc2"/>
<path d="M335 1112.500 L340 1128 Q341 1130.500 344 1130.500 H372.5 Q375.5 1130.500 375.5 1127.500 V1112.500" fill="#dfe2ee" stroke="#a9afc2"/>
<path d="M259 1112.500 L264 1128 Q265 1130.500 268 1130.500 H332.5 Q335.5 1130.500 335.5 1127.500 V1112.500" fill="#dfe2ee" stroke="#a9afc2"/>
<path d="M375 1112.500 L380 1128 Q381 1130.500 384 1130.500 H419 Q422 1130.500 422 1127.500 V1112.500" fill="#fdfdfe" stroke="#a9afc2"/>
<path d="M480.500 1117.500 h3 v3 h3 v3 h-3 v3 h-3 v-3 h-3 v-3 h3z" fill="#fff" stroke="#555" stroke-width=".9"/>
</svg>
<span class="t" style="left:269.5px;top:1115.3px;font-size:12px;letter-spacing:-0.199px;color:#111;">Perspective</span>
<span class="t" style="left:347.5px;top:1115.3px;font-size:12px;letter-spacing:0.385px;color:#111;">Top</span>
<span class="t" style="left:385.5px;top:1115.3px;font-size:12px;letter-spacing:0.099px;color:#111;">Front</span>
<span class="t" style="left:434.0px;top:1115.3px;font-size:12px;letter-spacing:-0.402px;color:#111;">Right</span>
<div class="a" style="left:12px;top:1132px;width:1287px;height:21px;background:#e3e6ee;border-top:1px solid #c9ccd6"></div>
<div class="a" style="left:12px;top:1133px;width:57px;height:19px;background:#e3e6ee;border-right:1px solid #c3c6d0"></div>
<span class="t" style="left:19.0px;top:1136.1px;font-size:12px;letter-spacing:0.274px;color:#111;">CPlane</span>
<div class="a" style="left:69px;top:1133px;width:88px;height:19px;background:#e3e6ee;border-right:1px solid #c3c6d0"></div>
<span class="t" style="left:92.0px;top:1136.1px;font-size:12px;letter-spacing:-0.051px;color:#111;">x 7.658</span>
<div class="a" style="left:157px;top:1133px;width:88px;height:19px;background:#e3e6ee;border-right:1px solid #c3c6d0"></div>
<span class="t" style="left:180.5px;top:1136.1px;font-size:12px;letter-spacing:-0.051px;color:#111;">y 7.361</span>
<div class="a" style="left:245px;top:1133px;width:88px;height:19px;background:#e3e6ee;border-right:1px solid #c3c6d0"></div>
<span class="t" style="left:268.5px;top:1136.1px;font-size:12px;letter-spacing:-0.051px;color:#111;">z 0.000</span>
<div class="a" style="left:333px;top:1133px;width:88px;height:19px;background:#e3e6ee;border-right:1px solid #c3c6d0"></div>
<span class="t" style="left:346.5px;top:1136.1px;font-size:12px;letter-spacing:0.197px;color:#111;">Millimeters</span>
<div class="a" style="left:421px;top:1133px;width:173px;height:19px;background:#e3e6ee;border-right:1px solid #c3c6d0"></div>
<div class="a" style="left:594px;top:1133px;width:75px;height:19px;background:#e3e6ee;border-right:1px solid #c3c6d0"></div>
<span class="t" style="left:604.0px;top:1136.1px;font-size:12px;letter-spacing:0.108px;color:#111;">Grid Snap</span>
<div class="a" style="left:669px;top:1133px;width:47px;height:19px;background:#e3e6ee;border-right:1px solid #c3c6d0"></div>
<span class="t" style="left:678.0px;top:1136.1px;font-size:12px;letter-spacing:-0.002px;color:#111;">Ortho</span>
<div class="a" style="left:716px;top:1133px;width:55px;height:19px;background:#e3e6ee;border-right:1px solid #c3c6d0"></div>
<span class="t" style="left:725.5px;top:1136.1px;font-size:12px;letter-spacing:0.302px;color:#111;">Planar</span>
<div class="a" style="left:771px;top:1133px;width:53px;height:19px;background:#e3e6ee;border-right:1px solid #c3c6d0"></div>
<span class="t" style="left:779.0px;top:1136.1px;font-size:12px;letter-spacing:0.229px;color:#111;">Osnap</span>
<div class="a" style="left:824px;top:1133px;width:85px;height:19px;background:#eef5fd;border-right:1px solid #c3c6d0"></div>
<span class="t" style="left:835.0px;top:1136.1px;font-size:12px;font-weight:bold;letter-spacing:-0.037px;color:#111;">SmartTrack</span>
<div class="a" style="left:909px;top:1133px;width:66px;height:19px;background:#eef5fd;border-right:1px solid #c3c6d0"></div>
<span class="t" style="left:919.5px;top:1136.1px;font-size:12px;font-weight:bold;letter-spacing:-0.215px;color:#111;">Gumball</span>
<div class="a" style="left:975px;top:1133px;width:110px;height:19px;background:#e3e6ee;border-right:1px solid #c3c6d0"></div>
<span class="t" style="left:990.0px;top:1136.1px;font-size:12px;letter-spacing:0.118px;color:#111;">Record History</span>
<div class="a" style="left:1085px;top:1133px;width:45px;height:19px;background:#e3e6ee;border-right:1px solid #c3c6d0"></div>
<span class="t" style="left:1094.0px;top:1136.1px;font-size:12px;letter-spacing:0.056px;color:#111;">Filter</span>
<div class="a" style="left:1130px;top:1133px;width:143px;height:19px;background:#e3e6ee;border-right:1px solid #c3c6d0"></div>
<span class="t" style="left:1133.0px;top:1136.1px;font-size:12px;letter-spacing:0.076px;color:#111;">Available physical me...</span>
<div class="a" style="left:425px;top:1137px;width:12px;height:12px;background:#4bea21;border:1px solid #222"></div>
<span class="t" style="left:440.0px;top:1136.1px;font-size:12px;letter-spacing:0.192px;color:#111;">construction</span>
<div class="a" style="left:0;top:1160px;width:1920px;height:40px;background:linear-gradient(90deg,#a5bcd9 0,#a7bfdc 1720px,#8a9db6 1760px,#8599b1 1905px);border-top:1px solid #c8d6e8"></div>
<div class="a" style="left:0;top:1160px;width:1920px;height:1px;background:#5b6675"></div>
<div class="a" style="left:0;top:1161px;width:1920px;height:1px;background:#c3d3e6"></div>
<div class="a" style="left:1906px;top:1162px;width:14px;height:38px;border:1px solid #4e5a68;background:linear-gradient(135deg,#b1bcc8 0,#8a96a4 45%,#6f7b8a 50%,#8893a2 100%)"></div>
<div class="a" style="left:0;top:1161px;width:58px;height:39px;background:linear-gradient(90deg,#8fa5c2,#9cb3d0 70%,#a5bcd9)"></div>
<div class="a" style="left:9px;top:1162px;width:37px;height:37px;border-radius:50%;background:radial-gradient(circle at 50% 30%,#7fd0f5 0,#2f8fd0 35%,#1a5fa8 60%,#0d3b78 100%);box-shadow:0 0 0 1.500px #2c4a70,0 0 3px 2px rgba(20,40,70,.5)"></div>
<svg style="left:9px;top:1162px" width="37" height="37" viewBox="0 0 37 37"><ellipse cx="18.500" cy="9" rx="14" ry="8" fill="#fff" opacity=".25"/><path d="M10 12 C13 10 15 10 17.500 11.500 L16 18 C13.500 16.500 11.500 16.500 8.500 18z" fill="#f25b22"/><path d="M19 12 C22 14 24 14 27.500 12 L26 18.500 C23 20.500 20.500 20 17.500 18.500z" fill="#8cc63f"/><path d="M8 19.500 C11 18 13 18 15.500 19.500 L14 26 C11.500 24.500 9.500 24.500 6.500 26z" fill="#2aa9e0"/><path d="M17 20 C20 22 22.500 22 25.500 20 L24 26.500 C21 28.500 18.500 28 15.500 26.500z" fill="#fbc21c"/></svg>
<div class="a" style="left:60px;top:1162px;width:51px;height:38px;border:1px solid #6f7f95;border-radius:3px;background:linear-gradient(180deg,#c9d8ea 0,#b3c7df 50%,#a3badb 51%,#b4c9e3 100%);box-shadow:0 0 0 1px rgba(255,255,255,.55) inset"></div>
<div class="a" style="left:113px;top:1164px;width:4px;height:34px;border-left:1px solid #7f90a7;border-right:1px solid #7f90a7;background:#b9cce3"></div>
<svg style="left:68px;top:1163px" width="36" height="36" viewBox="0 0 36 36"><ellipse cx="17" cy="18" rx="18" ry="7" transform="rotate(-38 17 18)" fill="none" stroke="#f1c232" stroke-width="2.800"/><circle cx="18" cy="19.500" r="10.500" fill="none" stroke="#2f9fe6" stroke-width="5.500"/><rect x="8" y="17.500" width="22" height="4.200" fill="#2f9fe6"/><path d="M19 21.700 h14 v8 h-7z" fill="#b0c5e0"/><path d="M2 30 C4 20 14 8 28 4.500" fill="none" stroke="#f1c232" stroke-width="2.800"/></svg>
<svg style="left:132px;top:1164px" width="40" height="34" viewBox="0 0 40 34"><path d="M3 6 h12 l2 3 h15 v20 h-29z" fill="#f6dc86" stroke="#c9a43a" stroke-width="1"/><path d="M8 3 h12 l2 3 h12 v6 h-26z" fill="#f9e7a6" stroke="#c9a43a" stroke-width=".8"/><rect x="6" y="3.500" width="3" height="2" fill="#2e9f3e"/><rect x="15" y="5" width="3" height="2" fill="#d23c2a"/><rect x="23" y="7" width="3" height="2" fill="#2a7fd2"/><path d="M3 11 h30 v18 h-30z" fill="#f7e08f" stroke="#c9a43a" stroke-width="1"/><path d="M5 20 q0 -3 3 -3 h19 q3 0 3 3 v11 h-7 v-7 h-11 v7 h-7z" fill="#8fc4ea" stroke="#4f8fc4" stroke-width="1" opacity=".95"/><path d="M6 20 h23" stroke="#e8f5ff" stroke-width="1.500"/></svg>
<svg style="left:196px;top:1165px" width="34" height="32" viewBox="0 0 34 32"><path d="M6 3 h20 l4 2 v20 l-4 3 h-20z" fill="#bcd4ec" stroke="#8fb0d4" stroke-width="1"/><rect x="3.500" y="4.500" width="20" height="22" fill="#cfe2f4" stroke="#7ea6d0"/><circle cx="14" cy="16" r="8.500" fill="#f07a1a" stroke="#c25608" stroke-width="1"/><path d="M11 11 l8.500 5 -8.500 5z" fill="#fff"/></svg>
<div class="a" style="left:246px;top:1162px;width:58px;height:38px;border:1px solid #7f8ea3;border-radius:3px;background:linear-gradient(180deg,#f4f8fd 0,#e3ecf7 50%,#d3e0f0 51%,#e3edf8 100%);box-shadow:0 0 0 1px rgba(255,255,255,.8) inset"></div>
<svg style="left:259px;top:1164px" width="33" height="33" viewBox="0 0 33 33"><rect width="33" height="33" fill="#121212"/><path d="M2 12 C6 6 12 3 16 6 L20 9 L30 2 L27 12 C26 18 22 22 16 25 L11 30 L8 27 L10 22 C6 20 3 17 2 12z" fill="#e6e6e6"/><path d="M5 4 C9 2 13 2 15 5 L9 11 L4 9z" fill="#121212"/><path d="M14 18 l8 -4 2 3 -7 5z" fill="#121212"/><circle cx="7" cy="17" r="1.500" fill="#d2203a"/><path d="M17 26 l3 3 3 -1 1 2" stroke="#e6e6e6" stroke-width="1.500" fill="none"/></svg>
<svg style="left:1760px;top:1162px" width="80" height="38" viewBox="1760 1162 80 38"><path d="M1767 1184.500 l4.500 -5 4.500 5z" fill="#fff"/><rect x="1793.500" y="1176.500" width="9" height="8" fill="#7f8fa3" stroke="#fff" stroke-width="1.300"/><path d="M1793 1187.500 h10 M1798 1185 v2.500" stroke="#fff" stroke-width="1.300"/><path d="M1788.500 1174 v5 h4 v-5 M1790.500 1179 v8 h3" fill="none" stroke="#fff" stroke-width="1.300"/><path d="M1811.500 1178 h2.500 l3.500 -3.500 v12 l-3.500 -3.500 h-2.500z" fill="#fff" stroke="#ddd" stroke-width=".6"/><circle cx="1822" cy="1184.500" r="3.800" fill="#e03030" stroke="#fff" stroke-width=".8"/><path d="M1820.300 1182.800 l3.400 3.400 M1823.700 1182.800 l-3.400 3.400" stroke="#fff" stroke-width="1.200"/></svg>
<span class="t" style="left:1848.5px;top:1165.1px;font-size:12px;letter-spacing:-0.241px;color:#fff;">4:28 PM</span>
<span class="t" style="left:1846.0px;top:1181.6px;font-size:12px;letter-spacing:-0.088px;color:#fff;">9/8/2014</span>
</body></html>
